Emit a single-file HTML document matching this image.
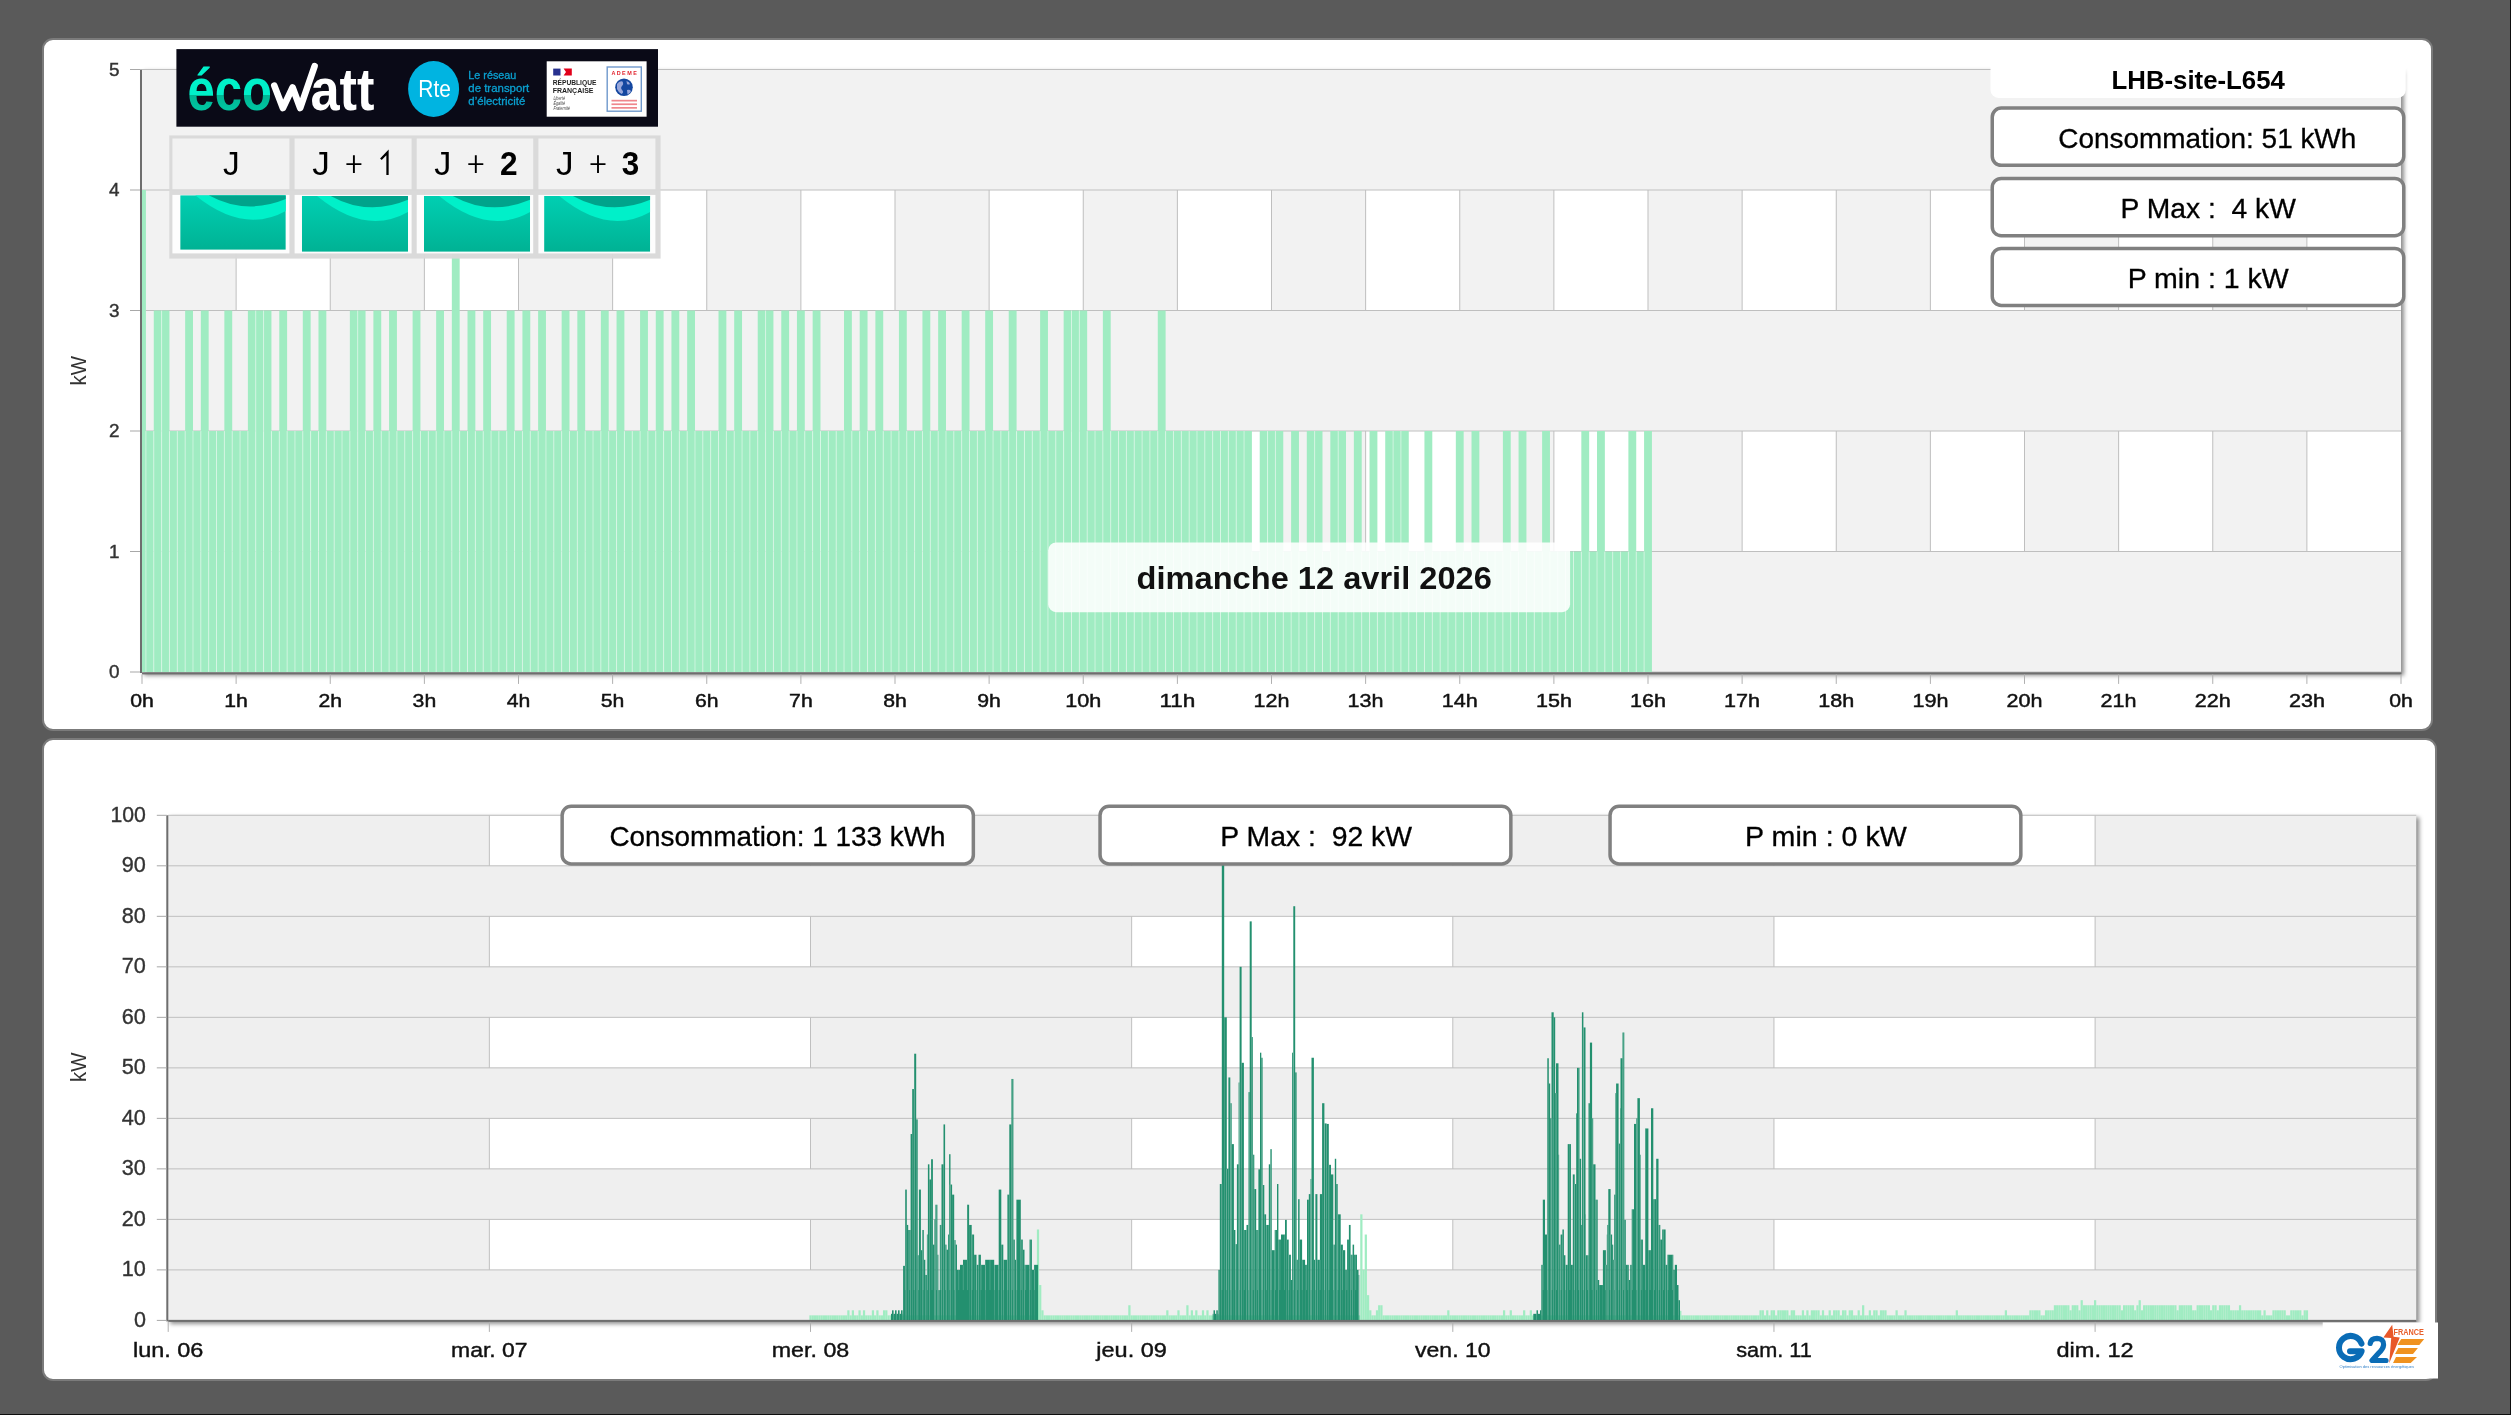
<!DOCTYPE html>
<html><head><meta charset="utf-8"><title>Consommation</title>
<style>html,body{margin:0;padding:0;background:#5a5a5a;overflow:hidden}svg{display:block;will-change:transform}text{font-family:"Liberation Sans", sans-serif}</style>
</head><body>
<svg width="2511" height="1415" viewBox="0 0 2511 1415">
<rect x="0" y="0" width="2511" height="1415" fill="#5a5a5a"/>
<rect x="2510" y="0" width="1" height="1415" fill="#0e0e0e"/>
<rect x="0" y="1414" width="2511" height="1" fill="#0e0e0e"/>
<rect x="43" y="39" width="2389" height="691" rx="10" fill="#fff" stroke="#7b7b7b" stroke-width="2"/>
<rect x="43" y="739" width="2393" height="641" rx="10" fill="#fff" stroke="#7b7b7b" stroke-width="2"/>
<defs><filter id="shblur" x="-5%" y="-5%" width="110%" height="110%"><feGaussianBlur stdDeviation="2.2"/></filter></defs>
<rect x="144.0" y="71.5" width="2260.0" height="604.0" fill="#000" fill-opacity="0.45" filter="url(#shblur)"/>
<rect x="142.0" y="69.5" width="2259.0" height="602.5" fill="#f2f2f2"/>
<rect x="236.12" y="431.00" width="94.12" height="120.50" fill="#fff"/>
<rect x="424.38" y="431.00" width="94.12" height="120.50" fill="#fff"/>
<rect x="612.62" y="431.00" width="94.12" height="120.50" fill="#fff"/>
<rect x="800.88" y="431.00" width="94.12" height="120.50" fill="#fff"/>
<rect x="989.12" y="431.00" width="94.12" height="120.50" fill="#fff"/>
<rect x="1177.38" y="431.00" width="94.12" height="120.50" fill="#fff"/>
<rect x="1365.62" y="431.00" width="94.12" height="120.50" fill="#fff"/>
<rect x="1553.88" y="431.00" width="94.12" height="120.50" fill="#fff"/>
<rect x="1742.12" y="431.00" width="94.12" height="120.50" fill="#fff"/>
<rect x="1930.38" y="431.00" width="94.12" height="120.50" fill="#fff"/>
<rect x="2118.62" y="431.00" width="94.12" height="120.50" fill="#fff"/>
<rect x="2306.88" y="431.00" width="94.12" height="120.50" fill="#fff"/>
<rect x="235.62" y="431.00" width="1" height="120.50" fill="#bfbfbf"/>
<rect x="329.75" y="431.00" width="1" height="120.50" fill="#bfbfbf"/>
<rect x="423.88" y="431.00" width="1" height="120.50" fill="#bfbfbf"/>
<rect x="518.00" y="431.00" width="1" height="120.50" fill="#bfbfbf"/>
<rect x="612.12" y="431.00" width="1" height="120.50" fill="#bfbfbf"/>
<rect x="706.25" y="431.00" width="1" height="120.50" fill="#bfbfbf"/>
<rect x="800.38" y="431.00" width="1" height="120.50" fill="#bfbfbf"/>
<rect x="894.50" y="431.00" width="1" height="120.50" fill="#bfbfbf"/>
<rect x="988.62" y="431.00" width="1" height="120.50" fill="#bfbfbf"/>
<rect x="1082.75" y="431.00" width="1" height="120.50" fill="#bfbfbf"/>
<rect x="1176.88" y="431.00" width="1" height="120.50" fill="#bfbfbf"/>
<rect x="1271.00" y="431.00" width="1" height="120.50" fill="#bfbfbf"/>
<rect x="1365.12" y="431.00" width="1" height="120.50" fill="#bfbfbf"/>
<rect x="1459.25" y="431.00" width="1" height="120.50" fill="#bfbfbf"/>
<rect x="1553.38" y="431.00" width="1" height="120.50" fill="#bfbfbf"/>
<rect x="1647.50" y="431.00" width="1" height="120.50" fill="#bfbfbf"/>
<rect x="1741.62" y="431.00" width="1" height="120.50" fill="#bfbfbf"/>
<rect x="1835.75" y="431.00" width="1" height="120.50" fill="#bfbfbf"/>
<rect x="1929.88" y="431.00" width="1" height="120.50" fill="#bfbfbf"/>
<rect x="2024.00" y="431.00" width="1" height="120.50" fill="#bfbfbf"/>
<rect x="2118.12" y="431.00" width="1" height="120.50" fill="#bfbfbf"/>
<rect x="2212.25" y="431.00" width="1" height="120.50" fill="#bfbfbf"/>
<rect x="2306.38" y="431.00" width="1" height="120.50" fill="#bfbfbf"/>
<rect x="236.12" y="190.00" width="94.12" height="120.50" fill="#fff"/>
<rect x="424.38" y="190.00" width="94.12" height="120.50" fill="#fff"/>
<rect x="612.62" y="190.00" width="94.12" height="120.50" fill="#fff"/>
<rect x="800.88" y="190.00" width="94.12" height="120.50" fill="#fff"/>
<rect x="989.12" y="190.00" width="94.12" height="120.50" fill="#fff"/>
<rect x="1177.38" y="190.00" width="94.12" height="120.50" fill="#fff"/>
<rect x="1365.62" y="190.00" width="94.12" height="120.50" fill="#fff"/>
<rect x="1553.88" y="190.00" width="94.12" height="120.50" fill="#fff"/>
<rect x="1742.12" y="190.00" width="94.12" height="120.50" fill="#fff"/>
<rect x="1930.38" y="190.00" width="94.12" height="120.50" fill="#fff"/>
<rect x="2118.62" y="190.00" width="94.12" height="120.50" fill="#fff"/>
<rect x="2306.88" y="190.00" width="94.12" height="120.50" fill="#fff"/>
<rect x="235.62" y="190.00" width="1" height="120.50" fill="#bfbfbf"/>
<rect x="329.75" y="190.00" width="1" height="120.50" fill="#bfbfbf"/>
<rect x="423.88" y="190.00" width="1" height="120.50" fill="#bfbfbf"/>
<rect x="518.00" y="190.00" width="1" height="120.50" fill="#bfbfbf"/>
<rect x="612.12" y="190.00" width="1" height="120.50" fill="#bfbfbf"/>
<rect x="706.25" y="190.00" width="1" height="120.50" fill="#bfbfbf"/>
<rect x="800.38" y="190.00" width="1" height="120.50" fill="#bfbfbf"/>
<rect x="894.50" y="190.00" width="1" height="120.50" fill="#bfbfbf"/>
<rect x="988.62" y="190.00" width="1" height="120.50" fill="#bfbfbf"/>
<rect x="1082.75" y="190.00" width="1" height="120.50" fill="#bfbfbf"/>
<rect x="1176.88" y="190.00" width="1" height="120.50" fill="#bfbfbf"/>
<rect x="1271.00" y="190.00" width="1" height="120.50" fill="#bfbfbf"/>
<rect x="1365.12" y="190.00" width="1" height="120.50" fill="#bfbfbf"/>
<rect x="1459.25" y="190.00" width="1" height="120.50" fill="#bfbfbf"/>
<rect x="1553.38" y="190.00" width="1" height="120.50" fill="#bfbfbf"/>
<rect x="1647.50" y="190.00" width="1" height="120.50" fill="#bfbfbf"/>
<rect x="1741.62" y="190.00" width="1" height="120.50" fill="#bfbfbf"/>
<rect x="1835.75" y="190.00" width="1" height="120.50" fill="#bfbfbf"/>
<rect x="1929.88" y="190.00" width="1" height="120.50" fill="#bfbfbf"/>
<rect x="2024.00" y="190.00" width="1" height="120.50" fill="#bfbfbf"/>
<rect x="2118.12" y="190.00" width="1" height="120.50" fill="#bfbfbf"/>
<rect x="2212.25" y="190.00" width="1" height="120.50" fill="#bfbfbf"/>
<rect x="2306.38" y="190.00" width="1" height="120.50" fill="#bfbfbf"/>
<rect x="142.0" y="671.50" width="2259.0" height="1" fill="#bfbfbf"/>
<rect x="142.0" y="551.00" width="2259.0" height="1" fill="#bfbfbf"/>
<rect x="142.0" y="430.50" width="2259.0" height="1" fill="#bfbfbf"/>
<rect x="142.0" y="310.00" width="2259.0" height="1" fill="#bfbfbf"/>
<rect x="142.0" y="189.50" width="2259.0" height="1" fill="#bfbfbf"/>
<rect x="142.0" y="69.00" width="2259.0" height="1" fill="#bfbfbf"/>
<g>
<rect x="142.00" y="190.00" width="3.92" height="482.00" fill="#a0ecc2"/>
<rect x="145.92" y="431.00" width="7.84" height="241.00" fill="#a0ecc2"/>
<rect x="153.77" y="310.50" width="7.84" height="361.50" fill="#a0ecc2"/>
<rect x="161.61" y="310.50" width="7.84" height="361.50" fill="#a0ecc2"/>
<rect x="169.45" y="431.00" width="7.84" height="241.00" fill="#a0ecc2"/>
<rect x="177.30" y="431.00" width="7.84" height="241.00" fill="#a0ecc2"/>
<rect x="185.14" y="310.50" width="7.84" height="361.50" fill="#a0ecc2"/>
<rect x="192.98" y="431.00" width="7.84" height="241.00" fill="#a0ecc2"/>
<rect x="200.83" y="310.50" width="7.84" height="361.50" fill="#a0ecc2"/>
<rect x="208.67" y="431.00" width="7.84" height="241.00" fill="#a0ecc2"/>
<rect x="216.52" y="431.00" width="7.84" height="241.00" fill="#a0ecc2"/>
<rect x="224.36" y="310.50" width="7.84" height="361.50" fill="#a0ecc2"/>
<rect x="232.20" y="431.00" width="7.84" height="241.00" fill="#a0ecc2"/>
<rect x="240.05" y="431.00" width="7.84" height="241.00" fill="#a0ecc2"/>
<rect x="247.89" y="310.50" width="7.84" height="361.50" fill="#a0ecc2"/>
<rect x="255.73" y="310.50" width="7.84" height="361.50" fill="#a0ecc2"/>
<rect x="263.58" y="310.50" width="7.84" height="361.50" fill="#a0ecc2"/>
<rect x="271.42" y="431.00" width="7.84" height="241.00" fill="#a0ecc2"/>
<rect x="279.27" y="310.50" width="7.84" height="361.50" fill="#a0ecc2"/>
<rect x="287.11" y="431.00" width="7.84" height="241.00" fill="#a0ecc2"/>
<rect x="294.95" y="431.00" width="7.84" height="241.00" fill="#a0ecc2"/>
<rect x="302.80" y="310.50" width="7.84" height="361.50" fill="#a0ecc2"/>
<rect x="310.64" y="431.00" width="7.84" height="241.00" fill="#a0ecc2"/>
<rect x="318.48" y="310.50" width="7.84" height="361.50" fill="#a0ecc2"/>
<rect x="326.33" y="431.00" width="7.84" height="241.00" fill="#a0ecc2"/>
<rect x="334.17" y="431.00" width="7.84" height="241.00" fill="#a0ecc2"/>
<rect x="342.02" y="431.00" width="7.84" height="241.00" fill="#a0ecc2"/>
<rect x="349.86" y="310.50" width="7.84" height="361.50" fill="#a0ecc2"/>
<rect x="357.70" y="310.50" width="7.84" height="361.50" fill="#a0ecc2"/>
<rect x="365.55" y="431.00" width="7.84" height="241.00" fill="#a0ecc2"/>
<rect x="373.39" y="310.50" width="7.84" height="361.50" fill="#a0ecc2"/>
<rect x="381.23" y="431.00" width="7.84" height="241.00" fill="#a0ecc2"/>
<rect x="389.08" y="310.50" width="7.84" height="361.50" fill="#a0ecc2"/>
<rect x="396.92" y="431.00" width="7.84" height="241.00" fill="#a0ecc2"/>
<rect x="404.77" y="431.00" width="7.84" height="241.00" fill="#a0ecc2"/>
<rect x="412.61" y="310.50" width="7.84" height="361.50" fill="#a0ecc2"/>
<rect x="420.45" y="431.00" width="7.84" height="241.00" fill="#a0ecc2"/>
<rect x="428.30" y="431.00" width="7.84" height="241.00" fill="#a0ecc2"/>
<rect x="436.14" y="310.50" width="7.84" height="361.50" fill="#a0ecc2"/>
<rect x="443.98" y="431.00" width="7.84" height="241.00" fill="#a0ecc2"/>
<rect x="451.83" y="190.00" width="7.84" height="482.00" fill="#a0ecc2"/>
<rect x="459.67" y="431.00" width="7.84" height="241.00" fill="#a0ecc2"/>
<rect x="467.52" y="310.50" width="7.84" height="361.50" fill="#a0ecc2"/>
<rect x="475.36" y="431.00" width="7.84" height="241.00" fill="#a0ecc2"/>
<rect x="483.20" y="310.50" width="7.84" height="361.50" fill="#a0ecc2"/>
<rect x="491.05" y="431.00" width="7.84" height="241.00" fill="#a0ecc2"/>
<rect x="498.89" y="431.00" width="7.84" height="241.00" fill="#a0ecc2"/>
<rect x="506.73" y="310.50" width="7.84" height="361.50" fill="#a0ecc2"/>
<rect x="514.58" y="431.00" width="7.84" height="241.00" fill="#a0ecc2"/>
<rect x="522.42" y="310.50" width="7.84" height="361.50" fill="#a0ecc2"/>
<rect x="530.27" y="431.00" width="7.84" height="241.00" fill="#a0ecc2"/>
<rect x="538.11" y="310.50" width="7.84" height="361.50" fill="#a0ecc2"/>
<rect x="545.95" y="431.00" width="7.84" height="241.00" fill="#a0ecc2"/>
<rect x="553.80" y="431.00" width="7.84" height="241.00" fill="#a0ecc2"/>
<rect x="561.64" y="310.50" width="7.84" height="361.50" fill="#a0ecc2"/>
<rect x="569.48" y="431.00" width="7.84" height="241.00" fill="#a0ecc2"/>
<rect x="577.33" y="310.50" width="7.84" height="361.50" fill="#a0ecc2"/>
<rect x="585.17" y="431.00" width="7.84" height="241.00" fill="#a0ecc2"/>
<rect x="593.02" y="431.00" width="7.84" height="241.00" fill="#a0ecc2"/>
<rect x="600.86" y="310.50" width="7.84" height="361.50" fill="#a0ecc2"/>
<rect x="608.70" y="431.00" width="7.84" height="241.00" fill="#a0ecc2"/>
<rect x="616.55" y="310.50" width="7.84" height="361.50" fill="#a0ecc2"/>
<rect x="624.39" y="431.00" width="7.84" height="241.00" fill="#a0ecc2"/>
<rect x="632.23" y="431.00" width="7.84" height="241.00" fill="#a0ecc2"/>
<rect x="640.08" y="310.50" width="7.84" height="361.50" fill="#a0ecc2"/>
<rect x="647.92" y="431.00" width="7.84" height="241.00" fill="#a0ecc2"/>
<rect x="655.77" y="310.50" width="7.84" height="361.50" fill="#a0ecc2"/>
<rect x="663.61" y="431.00" width="7.84" height="241.00" fill="#a0ecc2"/>
<rect x="671.45" y="310.50" width="7.84" height="361.50" fill="#a0ecc2"/>
<rect x="679.30" y="431.00" width="7.84" height="241.00" fill="#a0ecc2"/>
<rect x="687.14" y="310.50" width="7.84" height="361.50" fill="#a0ecc2"/>
<rect x="694.98" y="431.00" width="7.84" height="241.00" fill="#a0ecc2"/>
<rect x="702.83" y="431.00" width="7.84" height="241.00" fill="#a0ecc2"/>
<rect x="710.67" y="431.00" width="7.84" height="241.00" fill="#a0ecc2"/>
<rect x="718.52" y="310.50" width="7.84" height="361.50" fill="#a0ecc2"/>
<rect x="726.36" y="431.00" width="7.84" height="241.00" fill="#a0ecc2"/>
<rect x="734.20" y="310.50" width="7.84" height="361.50" fill="#a0ecc2"/>
<rect x="742.05" y="431.00" width="7.84" height="241.00" fill="#a0ecc2"/>
<rect x="749.89" y="431.00" width="7.84" height="241.00" fill="#a0ecc2"/>
<rect x="757.73" y="310.50" width="7.84" height="361.50" fill="#a0ecc2"/>
<rect x="765.58" y="310.50" width="7.84" height="361.50" fill="#a0ecc2"/>
<rect x="773.42" y="431.00" width="7.84" height="241.00" fill="#a0ecc2"/>
<rect x="781.27" y="310.50" width="7.84" height="361.50" fill="#a0ecc2"/>
<rect x="789.11" y="431.00" width="7.84" height="241.00" fill="#a0ecc2"/>
<rect x="796.95" y="310.50" width="7.84" height="361.50" fill="#a0ecc2"/>
<rect x="804.80" y="431.00" width="7.84" height="241.00" fill="#a0ecc2"/>
<rect x="812.64" y="310.50" width="7.84" height="361.50" fill="#a0ecc2"/>
<rect x="820.48" y="431.00" width="7.84" height="241.00" fill="#a0ecc2"/>
<rect x="828.33" y="431.00" width="7.84" height="241.00" fill="#a0ecc2"/>
<rect x="836.17" y="431.00" width="7.84" height="241.00" fill="#a0ecc2"/>
<rect x="844.02" y="310.50" width="7.84" height="361.50" fill="#a0ecc2"/>
<rect x="851.86" y="431.00" width="7.84" height="241.00" fill="#a0ecc2"/>
<rect x="859.70" y="310.50" width="7.84" height="361.50" fill="#a0ecc2"/>
<rect x="867.55" y="431.00" width="7.84" height="241.00" fill="#a0ecc2"/>
<rect x="875.39" y="310.50" width="7.84" height="361.50" fill="#a0ecc2"/>
<rect x="883.23" y="431.00" width="7.84" height="241.00" fill="#a0ecc2"/>
<rect x="891.08" y="431.00" width="7.84" height="241.00" fill="#a0ecc2"/>
<rect x="898.92" y="310.50" width="7.84" height="361.50" fill="#a0ecc2"/>
<rect x="906.77" y="431.00" width="7.84" height="241.00" fill="#a0ecc2"/>
<rect x="914.61" y="431.00" width="7.84" height="241.00" fill="#a0ecc2"/>
<rect x="922.45" y="310.50" width="7.84" height="361.50" fill="#a0ecc2"/>
<rect x="930.30" y="431.00" width="7.84" height="241.00" fill="#a0ecc2"/>
<rect x="938.14" y="310.50" width="7.84" height="361.50" fill="#a0ecc2"/>
<rect x="945.98" y="431.00" width="7.84" height="241.00" fill="#a0ecc2"/>
<rect x="953.83" y="431.00" width="7.84" height="241.00" fill="#a0ecc2"/>
<rect x="961.67" y="310.50" width="7.84" height="361.50" fill="#a0ecc2"/>
<rect x="969.52" y="431.00" width="7.84" height="241.00" fill="#a0ecc2"/>
<rect x="977.36" y="431.00" width="7.84" height="241.00" fill="#a0ecc2"/>
<rect x="985.20" y="310.50" width="7.84" height="361.50" fill="#a0ecc2"/>
<rect x="993.05" y="431.00" width="7.84" height="241.00" fill="#a0ecc2"/>
<rect x="1000.89" y="431.00" width="7.84" height="241.00" fill="#a0ecc2"/>
<rect x="1008.73" y="310.50" width="7.84" height="361.50" fill="#a0ecc2"/>
<rect x="1016.58" y="431.00" width="7.84" height="241.00" fill="#a0ecc2"/>
<rect x="1024.42" y="431.00" width="7.84" height="241.00" fill="#a0ecc2"/>
<rect x="1032.27" y="431.00" width="7.84" height="241.00" fill="#a0ecc2"/>
<rect x="1040.11" y="310.50" width="7.84" height="361.50" fill="#a0ecc2"/>
<rect x="1047.95" y="431.00" width="7.84" height="241.00" fill="#a0ecc2"/>
<rect x="1055.80" y="431.00" width="7.84" height="241.00" fill="#a0ecc2"/>
<rect x="1063.64" y="310.50" width="7.84" height="361.50" fill="#a0ecc2"/>
<rect x="1071.48" y="310.50" width="7.84" height="361.50" fill="#a0ecc2"/>
<rect x="1079.33" y="310.50" width="7.84" height="361.50" fill="#a0ecc2"/>
<rect x="1087.17" y="431.00" width="7.84" height="241.00" fill="#a0ecc2"/>
<rect x="1095.02" y="431.00" width="7.84" height="241.00" fill="#a0ecc2"/>
<rect x="1102.86" y="310.50" width="7.84" height="361.50" fill="#a0ecc2"/>
<rect x="1110.70" y="431.00" width="7.84" height="241.00" fill="#a0ecc2"/>
<rect x="1118.55" y="431.00" width="7.84" height="241.00" fill="#a0ecc2"/>
<rect x="1126.39" y="431.00" width="7.84" height="241.00" fill="#a0ecc2"/>
<rect x="1134.23" y="431.00" width="7.84" height="241.00" fill="#a0ecc2"/>
<rect x="1142.08" y="431.00" width="7.84" height="241.00" fill="#a0ecc2"/>
<rect x="1149.92" y="431.00" width="7.84" height="241.00" fill="#a0ecc2"/>
<rect x="1157.77" y="310.50" width="7.84" height="361.50" fill="#a0ecc2"/>
<rect x="1165.61" y="431.00" width="7.84" height="241.00" fill="#a0ecc2"/>
<rect x="1173.45" y="431.00" width="7.84" height="241.00" fill="#a0ecc2"/>
<rect x="1181.30" y="431.00" width="7.84" height="241.00" fill="#a0ecc2"/>
<rect x="1189.14" y="431.00" width="7.84" height="241.00" fill="#a0ecc2"/>
<rect x="1196.98" y="431.00" width="7.84" height="241.00" fill="#a0ecc2"/>
<rect x="1204.83" y="431.00" width="7.84" height="241.00" fill="#a0ecc2"/>
<rect x="1212.67" y="431.00" width="7.84" height="241.00" fill="#a0ecc2"/>
<rect x="1220.52" y="431.00" width="7.84" height="241.00" fill="#a0ecc2"/>
<rect x="1228.36" y="431.00" width="7.84" height="241.00" fill="#a0ecc2"/>
<rect x="1236.20" y="431.00" width="7.84" height="241.00" fill="#a0ecc2"/>
<rect x="1244.05" y="431.00" width="7.84" height="241.00" fill="#a0ecc2"/>
<rect x="1251.89" y="551.50" width="7.84" height="120.50" fill="#a0ecc2"/>
<rect x="1259.73" y="431.00" width="7.84" height="241.00" fill="#a0ecc2"/>
<rect x="1267.58" y="431.00" width="7.84" height="241.00" fill="#a0ecc2"/>
<rect x="1275.42" y="431.00" width="7.84" height="241.00" fill="#a0ecc2"/>
<rect x="1283.27" y="551.50" width="7.84" height="120.50" fill="#a0ecc2"/>
<rect x="1291.11" y="431.00" width="7.84" height="241.00" fill="#a0ecc2"/>
<rect x="1298.95" y="551.50" width="7.84" height="120.50" fill="#a0ecc2"/>
<rect x="1306.80" y="431.00" width="7.84" height="241.00" fill="#a0ecc2"/>
<rect x="1314.64" y="431.00" width="7.84" height="241.00" fill="#a0ecc2"/>
<rect x="1322.48" y="551.50" width="7.84" height="120.50" fill="#a0ecc2"/>
<rect x="1330.33" y="431.00" width="7.84" height="241.00" fill="#a0ecc2"/>
<rect x="1338.17" y="431.00" width="7.84" height="241.00" fill="#a0ecc2"/>
<rect x="1346.02" y="551.50" width="7.84" height="120.50" fill="#a0ecc2"/>
<rect x="1353.86" y="431.00" width="7.84" height="241.00" fill="#a0ecc2"/>
<rect x="1361.70" y="551.50" width="7.84" height="120.50" fill="#a0ecc2"/>
<rect x="1369.55" y="431.00" width="7.84" height="241.00" fill="#a0ecc2"/>
<rect x="1377.39" y="551.50" width="7.84" height="120.50" fill="#a0ecc2"/>
<rect x="1385.23" y="431.00" width="7.84" height="241.00" fill="#a0ecc2"/>
<rect x="1393.08" y="431.00" width="7.84" height="241.00" fill="#a0ecc2"/>
<rect x="1400.92" y="431.00" width="7.84" height="241.00" fill="#a0ecc2"/>
<rect x="1408.77" y="551.50" width="7.84" height="120.50" fill="#a0ecc2"/>
<rect x="1416.61" y="551.50" width="7.84" height="120.50" fill="#a0ecc2"/>
<rect x="1424.45" y="431.00" width="7.84" height="241.00" fill="#a0ecc2"/>
<rect x="1432.30" y="551.50" width="7.84" height="120.50" fill="#a0ecc2"/>
<rect x="1440.14" y="551.50" width="7.84" height="120.50" fill="#a0ecc2"/>
<rect x="1447.98" y="551.50" width="7.84" height="120.50" fill="#a0ecc2"/>
<rect x="1455.83" y="431.00" width="7.84" height="241.00" fill="#a0ecc2"/>
<rect x="1463.67" y="551.50" width="7.84" height="120.50" fill="#a0ecc2"/>
<rect x="1471.52" y="431.00" width="7.84" height="241.00" fill="#a0ecc2"/>
<rect x="1479.36" y="551.50" width="7.84" height="120.50" fill="#a0ecc2"/>
<rect x="1487.20" y="551.50" width="7.84" height="120.50" fill="#a0ecc2"/>
<rect x="1495.05" y="551.50" width="7.84" height="120.50" fill="#a0ecc2"/>
<rect x="1502.89" y="431.00" width="7.84" height="241.00" fill="#a0ecc2"/>
<rect x="1510.73" y="551.50" width="7.84" height="120.50" fill="#a0ecc2"/>
<rect x="1518.58" y="431.00" width="7.84" height="241.00" fill="#a0ecc2"/>
<rect x="1526.42" y="551.50" width="7.84" height="120.50" fill="#a0ecc2"/>
<rect x="1534.27" y="551.50" width="7.84" height="120.50" fill="#a0ecc2"/>
<rect x="1542.11" y="431.00" width="7.84" height="241.00" fill="#a0ecc2"/>
<rect x="1549.95" y="551.50" width="7.84" height="120.50" fill="#a0ecc2"/>
<rect x="1557.80" y="551.50" width="7.84" height="120.50" fill="#a0ecc2"/>
<rect x="1565.64" y="551.50" width="7.84" height="120.50" fill="#a0ecc2"/>
<rect x="1573.48" y="551.50" width="7.84" height="120.50" fill="#a0ecc2"/>
<rect x="1581.33" y="431.00" width="7.84" height="241.00" fill="#a0ecc2"/>
<rect x="1589.17" y="551.50" width="7.84" height="120.50" fill="#a0ecc2"/>
<rect x="1597.02" y="431.00" width="7.84" height="241.00" fill="#a0ecc2"/>
<rect x="1604.86" y="551.50" width="7.84" height="120.50" fill="#a0ecc2"/>
<rect x="1612.70" y="551.50" width="7.84" height="120.50" fill="#a0ecc2"/>
<rect x="1620.55" y="551.50" width="7.84" height="120.50" fill="#a0ecc2"/>
<rect x="1628.39" y="431.00" width="7.84" height="241.00" fill="#a0ecc2"/>
<rect x="1636.23" y="551.50" width="7.84" height="120.50" fill="#a0ecc2"/>
<rect x="1644.08" y="431.00" width="7.84" height="241.00" fill="#a0ecc2"/>
<rect x="145.42" y="431.00" width="1" height="241.00" fill="#fff" fill-opacity="0.45"/>
<rect x="153.27" y="431.00" width="1" height="241.00" fill="#fff" fill-opacity="0.45"/>
<rect x="161.11" y="310.50" width="1" height="361.50" fill="#fff" fill-opacity="0.45"/>
<rect x="168.95" y="431.00" width="1" height="241.00" fill="#fff" fill-opacity="0.45"/>
<rect x="176.80" y="431.00" width="1" height="241.00" fill="#fff" fill-opacity="0.45"/>
<rect x="184.64" y="431.00" width="1" height="241.00" fill="#fff" fill-opacity="0.45"/>
<rect x="192.48" y="431.00" width="1" height="241.00" fill="#fff" fill-opacity="0.45"/>
<rect x="200.33" y="431.00" width="1" height="241.00" fill="#fff" fill-opacity="0.45"/>
<rect x="208.17" y="431.00" width="1" height="241.00" fill="#fff" fill-opacity="0.45"/>
<rect x="216.02" y="431.00" width="1" height="241.00" fill="#fff" fill-opacity="0.45"/>
<rect x="223.86" y="431.00" width="1" height="241.00" fill="#fff" fill-opacity="0.45"/>
<rect x="231.70" y="431.00" width="1" height="241.00" fill="#fff" fill-opacity="0.45"/>
<rect x="239.55" y="431.00" width="1" height="241.00" fill="#fff" fill-opacity="0.45"/>
<rect x="247.39" y="431.00" width="1" height="241.00" fill="#fff" fill-opacity="0.45"/>
<rect x="255.23" y="310.50" width="1" height="361.50" fill="#fff" fill-opacity="0.45"/>
<rect x="263.08" y="310.50" width="1" height="361.50" fill="#fff" fill-opacity="0.45"/>
<rect x="270.92" y="431.00" width="1" height="241.00" fill="#fff" fill-opacity="0.45"/>
<rect x="278.77" y="431.00" width="1" height="241.00" fill="#fff" fill-opacity="0.45"/>
<rect x="286.61" y="431.00" width="1" height="241.00" fill="#fff" fill-opacity="0.45"/>
<rect x="294.45" y="431.00" width="1" height="241.00" fill="#fff" fill-opacity="0.45"/>
<rect x="302.30" y="431.00" width="1" height="241.00" fill="#fff" fill-opacity="0.45"/>
<rect x="310.14" y="431.00" width="1" height="241.00" fill="#fff" fill-opacity="0.45"/>
<rect x="317.98" y="431.00" width="1" height="241.00" fill="#fff" fill-opacity="0.45"/>
<rect x="325.83" y="431.00" width="1" height="241.00" fill="#fff" fill-opacity="0.45"/>
<rect x="333.67" y="431.00" width="1" height="241.00" fill="#fff" fill-opacity="0.45"/>
<rect x="341.52" y="431.00" width="1" height="241.00" fill="#fff" fill-opacity="0.45"/>
<rect x="349.36" y="431.00" width="1" height="241.00" fill="#fff" fill-opacity="0.45"/>
<rect x="357.20" y="310.50" width="1" height="361.50" fill="#fff" fill-opacity="0.45"/>
<rect x="365.05" y="431.00" width="1" height="241.00" fill="#fff" fill-opacity="0.45"/>
<rect x="372.89" y="431.00" width="1" height="241.00" fill="#fff" fill-opacity="0.45"/>
<rect x="380.73" y="431.00" width="1" height="241.00" fill="#fff" fill-opacity="0.45"/>
<rect x="388.58" y="431.00" width="1" height="241.00" fill="#fff" fill-opacity="0.45"/>
<rect x="396.42" y="431.00" width="1" height="241.00" fill="#fff" fill-opacity="0.45"/>
<rect x="404.27" y="431.00" width="1" height="241.00" fill="#fff" fill-opacity="0.45"/>
<rect x="412.11" y="431.00" width="1" height="241.00" fill="#fff" fill-opacity="0.45"/>
<rect x="419.95" y="431.00" width="1" height="241.00" fill="#fff" fill-opacity="0.45"/>
<rect x="427.80" y="431.00" width="1" height="241.00" fill="#fff" fill-opacity="0.45"/>
<rect x="435.64" y="431.00" width="1" height="241.00" fill="#fff" fill-opacity="0.45"/>
<rect x="443.48" y="431.00" width="1" height="241.00" fill="#fff" fill-opacity="0.45"/>
<rect x="451.33" y="431.00" width="1" height="241.00" fill="#fff" fill-opacity="0.45"/>
<rect x="459.17" y="431.00" width="1" height="241.00" fill="#fff" fill-opacity="0.45"/>
<rect x="467.02" y="431.00" width="1" height="241.00" fill="#fff" fill-opacity="0.45"/>
<rect x="474.86" y="431.00" width="1" height="241.00" fill="#fff" fill-opacity="0.45"/>
<rect x="482.70" y="431.00" width="1" height="241.00" fill="#fff" fill-opacity="0.45"/>
<rect x="490.55" y="431.00" width="1" height="241.00" fill="#fff" fill-opacity="0.45"/>
<rect x="498.39" y="431.00" width="1" height="241.00" fill="#fff" fill-opacity="0.45"/>
<rect x="506.23" y="431.00" width="1" height="241.00" fill="#fff" fill-opacity="0.45"/>
<rect x="514.08" y="431.00" width="1" height="241.00" fill="#fff" fill-opacity="0.45"/>
<rect x="521.92" y="431.00" width="1" height="241.00" fill="#fff" fill-opacity="0.45"/>
<rect x="529.77" y="431.00" width="1" height="241.00" fill="#fff" fill-opacity="0.45"/>
<rect x="537.61" y="431.00" width="1" height="241.00" fill="#fff" fill-opacity="0.45"/>
<rect x="545.45" y="431.00" width="1" height="241.00" fill="#fff" fill-opacity="0.45"/>
<rect x="553.30" y="431.00" width="1" height="241.00" fill="#fff" fill-opacity="0.45"/>
<rect x="561.14" y="431.00" width="1" height="241.00" fill="#fff" fill-opacity="0.45"/>
<rect x="568.98" y="431.00" width="1" height="241.00" fill="#fff" fill-opacity="0.45"/>
<rect x="576.83" y="431.00" width="1" height="241.00" fill="#fff" fill-opacity="0.45"/>
<rect x="584.67" y="431.00" width="1" height="241.00" fill="#fff" fill-opacity="0.45"/>
<rect x="592.52" y="431.00" width="1" height="241.00" fill="#fff" fill-opacity="0.45"/>
<rect x="600.36" y="431.00" width="1" height="241.00" fill="#fff" fill-opacity="0.45"/>
<rect x="608.20" y="431.00" width="1" height="241.00" fill="#fff" fill-opacity="0.45"/>
<rect x="616.05" y="431.00" width="1" height="241.00" fill="#fff" fill-opacity="0.45"/>
<rect x="623.89" y="431.00" width="1" height="241.00" fill="#fff" fill-opacity="0.45"/>
<rect x="631.73" y="431.00" width="1" height="241.00" fill="#fff" fill-opacity="0.45"/>
<rect x="639.58" y="431.00" width="1" height="241.00" fill="#fff" fill-opacity="0.45"/>
<rect x="647.42" y="431.00" width="1" height="241.00" fill="#fff" fill-opacity="0.45"/>
<rect x="655.27" y="431.00" width="1" height="241.00" fill="#fff" fill-opacity="0.45"/>
<rect x="663.11" y="431.00" width="1" height="241.00" fill="#fff" fill-opacity="0.45"/>
<rect x="670.95" y="431.00" width="1" height="241.00" fill="#fff" fill-opacity="0.45"/>
<rect x="678.80" y="431.00" width="1" height="241.00" fill="#fff" fill-opacity="0.45"/>
<rect x="686.64" y="431.00" width="1" height="241.00" fill="#fff" fill-opacity="0.45"/>
<rect x="694.48" y="431.00" width="1" height="241.00" fill="#fff" fill-opacity="0.45"/>
<rect x="702.33" y="431.00" width="1" height="241.00" fill="#fff" fill-opacity="0.45"/>
<rect x="710.17" y="431.00" width="1" height="241.00" fill="#fff" fill-opacity="0.45"/>
<rect x="718.02" y="431.00" width="1" height="241.00" fill="#fff" fill-opacity="0.45"/>
<rect x="725.86" y="431.00" width="1" height="241.00" fill="#fff" fill-opacity="0.45"/>
<rect x="733.70" y="431.00" width="1" height="241.00" fill="#fff" fill-opacity="0.45"/>
<rect x="741.55" y="431.00" width="1" height="241.00" fill="#fff" fill-opacity="0.45"/>
<rect x="749.39" y="431.00" width="1" height="241.00" fill="#fff" fill-opacity="0.45"/>
<rect x="757.23" y="431.00" width="1" height="241.00" fill="#fff" fill-opacity="0.45"/>
<rect x="765.08" y="310.50" width="1" height="361.50" fill="#fff" fill-opacity="0.45"/>
<rect x="772.92" y="431.00" width="1" height="241.00" fill="#fff" fill-opacity="0.45"/>
<rect x="780.77" y="431.00" width="1" height="241.00" fill="#fff" fill-opacity="0.45"/>
<rect x="788.61" y="431.00" width="1" height="241.00" fill="#fff" fill-opacity="0.45"/>
<rect x="796.45" y="431.00" width="1" height="241.00" fill="#fff" fill-opacity="0.45"/>
<rect x="804.30" y="431.00" width="1" height="241.00" fill="#fff" fill-opacity="0.45"/>
<rect x="812.14" y="431.00" width="1" height="241.00" fill="#fff" fill-opacity="0.45"/>
<rect x="819.98" y="431.00" width="1" height="241.00" fill="#fff" fill-opacity="0.45"/>
<rect x="827.83" y="431.00" width="1" height="241.00" fill="#fff" fill-opacity="0.45"/>
<rect x="835.67" y="431.00" width="1" height="241.00" fill="#fff" fill-opacity="0.45"/>
<rect x="843.52" y="431.00" width="1" height="241.00" fill="#fff" fill-opacity="0.45"/>
<rect x="851.36" y="431.00" width="1" height="241.00" fill="#fff" fill-opacity="0.45"/>
<rect x="859.20" y="431.00" width="1" height="241.00" fill="#fff" fill-opacity="0.45"/>
<rect x="867.05" y="431.00" width="1" height="241.00" fill="#fff" fill-opacity="0.45"/>
<rect x="874.89" y="431.00" width="1" height="241.00" fill="#fff" fill-opacity="0.45"/>
<rect x="882.73" y="431.00" width="1" height="241.00" fill="#fff" fill-opacity="0.45"/>
<rect x="890.58" y="431.00" width="1" height="241.00" fill="#fff" fill-opacity="0.45"/>
<rect x="898.42" y="431.00" width="1" height="241.00" fill="#fff" fill-opacity="0.45"/>
<rect x="906.27" y="431.00" width="1" height="241.00" fill="#fff" fill-opacity="0.45"/>
<rect x="914.11" y="431.00" width="1" height="241.00" fill="#fff" fill-opacity="0.45"/>
<rect x="921.95" y="431.00" width="1" height="241.00" fill="#fff" fill-opacity="0.45"/>
<rect x="929.80" y="431.00" width="1" height="241.00" fill="#fff" fill-opacity="0.45"/>
<rect x="937.64" y="431.00" width="1" height="241.00" fill="#fff" fill-opacity="0.45"/>
<rect x="945.48" y="431.00" width="1" height="241.00" fill="#fff" fill-opacity="0.45"/>
<rect x="953.33" y="431.00" width="1" height="241.00" fill="#fff" fill-opacity="0.45"/>
<rect x="961.17" y="431.00" width="1" height="241.00" fill="#fff" fill-opacity="0.45"/>
<rect x="969.02" y="431.00" width="1" height="241.00" fill="#fff" fill-opacity="0.45"/>
<rect x="976.86" y="431.00" width="1" height="241.00" fill="#fff" fill-opacity="0.45"/>
<rect x="984.70" y="431.00" width="1" height="241.00" fill="#fff" fill-opacity="0.45"/>
<rect x="992.55" y="431.00" width="1" height="241.00" fill="#fff" fill-opacity="0.45"/>
<rect x="1000.39" y="431.00" width="1" height="241.00" fill="#fff" fill-opacity="0.45"/>
<rect x="1008.23" y="431.00" width="1" height="241.00" fill="#fff" fill-opacity="0.45"/>
<rect x="1016.08" y="431.00" width="1" height="241.00" fill="#fff" fill-opacity="0.45"/>
<rect x="1023.92" y="431.00" width="1" height="241.00" fill="#fff" fill-opacity="0.45"/>
<rect x="1031.77" y="431.00" width="1" height="241.00" fill="#fff" fill-opacity="0.45"/>
<rect x="1039.61" y="431.00" width="1" height="241.00" fill="#fff" fill-opacity="0.45"/>
<rect x="1047.45" y="431.00" width="1" height="241.00" fill="#fff" fill-opacity="0.45"/>
<rect x="1055.30" y="431.00" width="1" height="241.00" fill="#fff" fill-opacity="0.45"/>
<rect x="1063.14" y="431.00" width="1" height="241.00" fill="#fff" fill-opacity="0.45"/>
<rect x="1070.98" y="310.50" width="1" height="361.50" fill="#fff" fill-opacity="0.45"/>
<rect x="1078.83" y="310.50" width="1" height="361.50" fill="#fff" fill-opacity="0.45"/>
<rect x="1086.67" y="431.00" width="1" height="241.00" fill="#fff" fill-opacity="0.45"/>
<rect x="1094.52" y="431.00" width="1" height="241.00" fill="#fff" fill-opacity="0.45"/>
<rect x="1102.36" y="431.00" width="1" height="241.00" fill="#fff" fill-opacity="0.45"/>
<rect x="1110.20" y="431.00" width="1" height="241.00" fill="#fff" fill-opacity="0.45"/>
<rect x="1118.05" y="431.00" width="1" height="241.00" fill="#fff" fill-opacity="0.45"/>
<rect x="1125.89" y="431.00" width="1" height="241.00" fill="#fff" fill-opacity="0.45"/>
<rect x="1133.73" y="431.00" width="1" height="241.00" fill="#fff" fill-opacity="0.45"/>
<rect x="1141.58" y="431.00" width="1" height="241.00" fill="#fff" fill-opacity="0.45"/>
<rect x="1149.42" y="431.00" width="1" height="241.00" fill="#fff" fill-opacity="0.45"/>
<rect x="1157.27" y="431.00" width="1" height="241.00" fill="#fff" fill-opacity="0.45"/>
<rect x="1165.11" y="431.00" width="1" height="241.00" fill="#fff" fill-opacity="0.45"/>
<rect x="1172.95" y="431.00" width="1" height="241.00" fill="#fff" fill-opacity="0.45"/>
<rect x="1180.80" y="431.00" width="1" height="241.00" fill="#fff" fill-opacity="0.45"/>
<rect x="1188.64" y="431.00" width="1" height="241.00" fill="#fff" fill-opacity="0.45"/>
<rect x="1196.48" y="431.00" width="1" height="241.00" fill="#fff" fill-opacity="0.45"/>
<rect x="1204.33" y="431.00" width="1" height="241.00" fill="#fff" fill-opacity="0.45"/>
<rect x="1212.17" y="431.00" width="1" height="241.00" fill="#fff" fill-opacity="0.45"/>
<rect x="1220.02" y="431.00" width="1" height="241.00" fill="#fff" fill-opacity="0.45"/>
<rect x="1227.86" y="431.00" width="1" height="241.00" fill="#fff" fill-opacity="0.45"/>
<rect x="1235.70" y="431.00" width="1" height="241.00" fill="#fff" fill-opacity="0.45"/>
<rect x="1243.55" y="431.00" width="1" height="241.00" fill="#fff" fill-opacity="0.45"/>
<rect x="1251.39" y="551.50" width="1" height="120.50" fill="#fff" fill-opacity="0.45"/>
<rect x="1259.23" y="551.50" width="1" height="120.50" fill="#fff" fill-opacity="0.45"/>
<rect x="1267.08" y="431.00" width="1" height="241.00" fill="#fff" fill-opacity="0.45"/>
<rect x="1274.92" y="431.00" width="1" height="241.00" fill="#fff" fill-opacity="0.45"/>
<rect x="1282.77" y="551.50" width="1" height="120.50" fill="#fff" fill-opacity="0.45"/>
<rect x="1290.61" y="551.50" width="1" height="120.50" fill="#fff" fill-opacity="0.45"/>
<rect x="1298.45" y="551.50" width="1" height="120.50" fill="#fff" fill-opacity="0.45"/>
<rect x="1306.30" y="551.50" width="1" height="120.50" fill="#fff" fill-opacity="0.45"/>
<rect x="1314.14" y="431.00" width="1" height="241.00" fill="#fff" fill-opacity="0.45"/>
<rect x="1321.98" y="551.50" width="1" height="120.50" fill="#fff" fill-opacity="0.45"/>
<rect x="1329.83" y="551.50" width="1" height="120.50" fill="#fff" fill-opacity="0.45"/>
<rect x="1337.67" y="431.00" width="1" height="241.00" fill="#fff" fill-opacity="0.45"/>
<rect x="1345.52" y="551.50" width="1" height="120.50" fill="#fff" fill-opacity="0.45"/>
<rect x="1353.36" y="551.50" width="1" height="120.50" fill="#fff" fill-opacity="0.45"/>
<rect x="1361.20" y="551.50" width="1" height="120.50" fill="#fff" fill-opacity="0.45"/>
<rect x="1369.05" y="551.50" width="1" height="120.50" fill="#fff" fill-opacity="0.45"/>
<rect x="1376.89" y="551.50" width="1" height="120.50" fill="#fff" fill-opacity="0.45"/>
<rect x="1384.73" y="551.50" width="1" height="120.50" fill="#fff" fill-opacity="0.45"/>
<rect x="1392.58" y="431.00" width="1" height="241.00" fill="#fff" fill-opacity="0.45"/>
<rect x="1400.42" y="431.00" width="1" height="241.00" fill="#fff" fill-opacity="0.45"/>
<rect x="1408.27" y="551.50" width="1" height="120.50" fill="#fff" fill-opacity="0.45"/>
<rect x="1416.11" y="551.50" width="1" height="120.50" fill="#fff" fill-opacity="0.45"/>
<rect x="1423.95" y="551.50" width="1" height="120.50" fill="#fff" fill-opacity="0.45"/>
<rect x="1431.80" y="551.50" width="1" height="120.50" fill="#fff" fill-opacity="0.45"/>
<rect x="1439.64" y="551.50" width="1" height="120.50" fill="#fff" fill-opacity="0.45"/>
<rect x="1447.48" y="551.50" width="1" height="120.50" fill="#fff" fill-opacity="0.45"/>
<rect x="1455.33" y="551.50" width="1" height="120.50" fill="#fff" fill-opacity="0.45"/>
<rect x="1463.17" y="551.50" width="1" height="120.50" fill="#fff" fill-opacity="0.45"/>
<rect x="1471.02" y="551.50" width="1" height="120.50" fill="#fff" fill-opacity="0.45"/>
<rect x="1478.86" y="551.50" width="1" height="120.50" fill="#fff" fill-opacity="0.45"/>
<rect x="1486.70" y="551.50" width="1" height="120.50" fill="#fff" fill-opacity="0.45"/>
<rect x="1494.55" y="551.50" width="1" height="120.50" fill="#fff" fill-opacity="0.45"/>
<rect x="1502.39" y="551.50" width="1" height="120.50" fill="#fff" fill-opacity="0.45"/>
<rect x="1510.23" y="551.50" width="1" height="120.50" fill="#fff" fill-opacity="0.45"/>
<rect x="1518.08" y="551.50" width="1" height="120.50" fill="#fff" fill-opacity="0.45"/>
<rect x="1525.92" y="551.50" width="1" height="120.50" fill="#fff" fill-opacity="0.45"/>
<rect x="1533.77" y="551.50" width="1" height="120.50" fill="#fff" fill-opacity="0.45"/>
<rect x="1541.61" y="551.50" width="1" height="120.50" fill="#fff" fill-opacity="0.45"/>
<rect x="1549.45" y="551.50" width="1" height="120.50" fill="#fff" fill-opacity="0.45"/>
<rect x="1557.30" y="551.50" width="1" height="120.50" fill="#fff" fill-opacity="0.45"/>
<rect x="1565.14" y="551.50" width="1" height="120.50" fill="#fff" fill-opacity="0.45"/>
<rect x="1572.98" y="551.50" width="1" height="120.50" fill="#fff" fill-opacity="0.45"/>
<rect x="1580.83" y="551.50" width="1" height="120.50" fill="#fff" fill-opacity="0.45"/>
<rect x="1588.67" y="551.50" width="1" height="120.50" fill="#fff" fill-opacity="0.45"/>
<rect x="1596.52" y="551.50" width="1" height="120.50" fill="#fff" fill-opacity="0.45"/>
<rect x="1604.36" y="551.50" width="1" height="120.50" fill="#fff" fill-opacity="0.45"/>
<rect x="1612.20" y="551.50" width="1" height="120.50" fill="#fff" fill-opacity="0.45"/>
<rect x="1620.05" y="551.50" width="1" height="120.50" fill="#fff" fill-opacity="0.45"/>
<rect x="1627.89" y="551.50" width="1" height="120.50" fill="#fff" fill-opacity="0.45"/>
<rect x="1635.73" y="551.50" width="1" height="120.50" fill="#fff" fill-opacity="0.45"/>
<rect x="1643.58" y="551.50" width="1" height="120.50" fill="#fff" fill-opacity="0.45"/>
</g>
<rect x="140" y="69.5" width="2" height="603.5" fill="#6e6e6e"/>
<rect x="142.0" y="672.4" width="2259.5" height="2" fill="#6e6e6e"/>
<rect x="130" y="671.50" width="10" height="1" fill="#a8a8a8"/>
<rect x="130" y="551.00" width="10" height="1" fill="#a8a8a8"/>
<rect x="130" y="430.50" width="10" height="1" fill="#a8a8a8"/>
<rect x="130" y="310.00" width="10" height="1" fill="#a8a8a8"/>
<rect x="130" y="189.50" width="10" height="1" fill="#a8a8a8"/>
<rect x="130" y="69.00" width="10" height="1" fill="#a8a8a8"/>
<rect x="141.50" y="674.4" width="1" height="9.5" fill="#b0b0b0"/>
<rect x="235.62" y="674.4" width="1" height="9.5" fill="#b0b0b0"/>
<rect x="329.75" y="674.4" width="1" height="9.5" fill="#b0b0b0"/>
<rect x="423.88" y="674.4" width="1" height="9.5" fill="#b0b0b0"/>
<rect x="518.00" y="674.4" width="1" height="9.5" fill="#b0b0b0"/>
<rect x="612.12" y="674.4" width="1" height="9.5" fill="#b0b0b0"/>
<rect x="706.25" y="674.4" width="1" height="9.5" fill="#b0b0b0"/>
<rect x="800.38" y="674.4" width="1" height="9.5" fill="#b0b0b0"/>
<rect x="894.50" y="674.4" width="1" height="9.5" fill="#b0b0b0"/>
<rect x="988.62" y="674.4" width="1" height="9.5" fill="#b0b0b0"/>
<rect x="1082.75" y="674.4" width="1" height="9.5" fill="#b0b0b0"/>
<rect x="1176.88" y="674.4" width="1" height="9.5" fill="#b0b0b0"/>
<rect x="1271.00" y="674.4" width="1" height="9.5" fill="#b0b0b0"/>
<rect x="1365.12" y="674.4" width="1" height="9.5" fill="#b0b0b0"/>
<rect x="1459.25" y="674.4" width="1" height="9.5" fill="#b0b0b0"/>
<rect x="1553.38" y="674.4" width="1" height="9.5" fill="#b0b0b0"/>
<rect x="1647.50" y="674.4" width="1" height="9.5" fill="#b0b0b0"/>
<rect x="1741.62" y="674.4" width="1" height="9.5" fill="#b0b0b0"/>
<rect x="1835.75" y="674.4" width="1" height="9.5" fill="#b0b0b0"/>
<rect x="1929.88" y="674.4" width="1" height="9.5" fill="#b0b0b0"/>
<rect x="2024.00" y="674.4" width="1" height="9.5" fill="#b0b0b0"/>
<rect x="2118.12" y="674.4" width="1" height="9.5" fill="#b0b0b0"/>
<rect x="2212.25" y="674.4" width="1" height="9.5" fill="#b0b0b0"/>
<rect x="2306.38" y="674.4" width="1" height="9.5" fill="#b0b0b0"/>
<rect x="2400.50" y="674.4" width="1" height="9.5" fill="#b0b0b0"/>
<text x="119.5" y="678.3" font-size="18" font-weight="400" fill="#333" text-anchor="end" textLength="10.5" lengthAdjust="spacingAndGlyphs" stroke="#333" stroke-width="0.4">0</text>
<text x="119.5" y="557.8" font-size="18" font-weight="400" fill="#333" text-anchor="end" textLength="10.5" lengthAdjust="spacingAndGlyphs" stroke="#333" stroke-width="0.4">1</text>
<text x="119.5" y="437.3" font-size="18" font-weight="400" fill="#333" text-anchor="end" textLength="10.5" lengthAdjust="spacingAndGlyphs" stroke="#333" stroke-width="0.4">2</text>
<text x="119.5" y="316.8" font-size="18" font-weight="400" fill="#333" text-anchor="end" textLength="10.5" lengthAdjust="spacingAndGlyphs" stroke="#333" stroke-width="0.4">3</text>
<text x="119.5" y="196.3" font-size="18" font-weight="400" fill="#333" text-anchor="end" textLength="10.5" lengthAdjust="spacingAndGlyphs" stroke="#333" stroke-width="0.4">4</text>
<text x="119.5" y="75.8" font-size="18" font-weight="400" fill="#333" text-anchor="end" textLength="10.5" lengthAdjust="spacingAndGlyphs" stroke="#333" stroke-width="0.4">5</text>
<text x="142.0" y="706.7" font-size="18" font-weight="400" fill="#111" text-anchor="middle" textLength="23.6" lengthAdjust="spacingAndGlyphs" stroke="#111" stroke-width="0.45">0h</text>
<text x="236.1" y="706.7" font-size="18" font-weight="400" fill="#111" text-anchor="middle" textLength="23.6" lengthAdjust="spacingAndGlyphs" stroke="#111" stroke-width="0.45">1h</text>
<text x="330.2" y="706.7" font-size="18" font-weight="400" fill="#111" text-anchor="middle" textLength="23.6" lengthAdjust="spacingAndGlyphs" stroke="#111" stroke-width="0.45">2h</text>
<text x="424.4" y="706.7" font-size="18" font-weight="400" fill="#111" text-anchor="middle" textLength="23.6" lengthAdjust="spacingAndGlyphs" stroke="#111" stroke-width="0.45">3h</text>
<text x="518.5" y="706.7" font-size="18" font-weight="400" fill="#111" text-anchor="middle" textLength="23.6" lengthAdjust="spacingAndGlyphs" stroke="#111" stroke-width="0.45">4h</text>
<text x="612.6" y="706.7" font-size="18" font-weight="400" fill="#111" text-anchor="middle" textLength="23.6" lengthAdjust="spacingAndGlyphs" stroke="#111" stroke-width="0.45">5h</text>
<text x="706.8" y="706.7" font-size="18" font-weight="400" fill="#111" text-anchor="middle" textLength="23.6" lengthAdjust="spacingAndGlyphs" stroke="#111" stroke-width="0.45">6h</text>
<text x="800.9" y="706.7" font-size="18" font-weight="400" fill="#111" text-anchor="middle" textLength="23.6" lengthAdjust="spacingAndGlyphs" stroke="#111" stroke-width="0.45">7h</text>
<text x="895.0" y="706.7" font-size="18" font-weight="400" fill="#111" text-anchor="middle" textLength="23.6" lengthAdjust="spacingAndGlyphs" stroke="#111" stroke-width="0.45">8h</text>
<text x="989.1" y="706.7" font-size="18" font-weight="400" fill="#111" text-anchor="middle" textLength="23.6" lengthAdjust="spacingAndGlyphs" stroke="#111" stroke-width="0.45">9h</text>
<text x="1083.2" y="706.7" font-size="18" font-weight="400" fill="#111" text-anchor="middle" textLength="36.0" lengthAdjust="spacingAndGlyphs" stroke="#111" stroke-width="0.45">10h</text>
<text x="1177.4" y="706.7" font-size="18" font-weight="400" fill="#111" text-anchor="middle" textLength="36.0" lengthAdjust="spacingAndGlyphs" stroke="#111" stroke-width="0.45">11h</text>
<text x="1271.5" y="706.7" font-size="18" font-weight="400" fill="#111" text-anchor="middle" textLength="36.0" lengthAdjust="spacingAndGlyphs" stroke="#111" stroke-width="0.45">12h</text>
<text x="1365.6" y="706.7" font-size="18" font-weight="400" fill="#111" text-anchor="middle" textLength="36.0" lengthAdjust="spacingAndGlyphs" stroke="#111" stroke-width="0.45">13h</text>
<text x="1459.8" y="706.7" font-size="18" font-weight="400" fill="#111" text-anchor="middle" textLength="36.0" lengthAdjust="spacingAndGlyphs" stroke="#111" stroke-width="0.45">14h</text>
<text x="1553.9" y="706.7" font-size="18" font-weight="400" fill="#111" text-anchor="middle" textLength="36.0" lengthAdjust="spacingAndGlyphs" stroke="#111" stroke-width="0.45">15h</text>
<text x="1648.0" y="706.7" font-size="18" font-weight="400" fill="#111" text-anchor="middle" textLength="36.0" lengthAdjust="spacingAndGlyphs" stroke="#111" stroke-width="0.45">16h</text>
<text x="1742.1" y="706.7" font-size="18" font-weight="400" fill="#111" text-anchor="middle" textLength="36.0" lengthAdjust="spacingAndGlyphs" stroke="#111" stroke-width="0.45">17h</text>
<text x="1836.2" y="706.7" font-size="18" font-weight="400" fill="#111" text-anchor="middle" textLength="36.0" lengthAdjust="spacingAndGlyphs" stroke="#111" stroke-width="0.45">18h</text>
<text x="1930.4" y="706.7" font-size="18" font-weight="400" fill="#111" text-anchor="middle" textLength="36.0" lengthAdjust="spacingAndGlyphs" stroke="#111" stroke-width="0.45">19h</text>
<text x="2024.5" y="706.7" font-size="18" font-weight="400" fill="#111" text-anchor="middle" textLength="36.0" lengthAdjust="spacingAndGlyphs" stroke="#111" stroke-width="0.45">20h</text>
<text x="2118.6" y="706.7" font-size="18" font-weight="400" fill="#111" text-anchor="middle" textLength="36.0" lengthAdjust="spacingAndGlyphs" stroke="#111" stroke-width="0.45">21h</text>
<text x="2212.8" y="706.7" font-size="18" font-weight="400" fill="#111" text-anchor="middle" textLength="36.0" lengthAdjust="spacingAndGlyphs" stroke="#111" stroke-width="0.45">22h</text>
<text x="2306.9" y="706.7" font-size="18" font-weight="400" fill="#111" text-anchor="middle" textLength="36.0" lengthAdjust="spacingAndGlyphs" stroke="#111" stroke-width="0.45">23h</text>
<text x="2401.0" y="706.7" font-size="18" font-weight="400" fill="#111" text-anchor="middle" textLength="23.6" lengthAdjust="spacingAndGlyphs" stroke="#111" stroke-width="0.45">0h</text>
<text transform="translate(85.9,370.7) rotate(-90)" x="0" y="0" font-size="22" fill="#333" text-anchor="middle" textLength="29.4" lengthAdjust="spacingAndGlyphs">kW</text>
<rect x="1048.2" y="542.5" width="521.9" height="69.7" rx="8" fill="#fff" fill-opacity="0.88"/>
<text x="1314.2" y="588.5" font-size="30.5" font-weight="700" fill="#111" text-anchor="middle" textLength="355.2" lengthAdjust="spacingAndGlyphs" >dimanche 12 avril 2026</text>
<rect x="1990.5" y="58" width="415.3" height="39.9" rx="8" fill="#fff"/>
<text x="2198.2" y="89.2" font-size="25.7" font-weight="700" fill="#000" text-anchor="middle" textLength="173.4" lengthAdjust="spacingAndGlyphs" >LHB-site-L654</text>
<rect x="1992.25" y="108.05" width="411.50" height="57.30" rx="9" fill="#fff" stroke="#808080" stroke-width="3.5"/>
<text x="2207.3" y="147.9" font-size="27.6" font-weight="400" fill="#000" text-anchor="middle" textLength="297.9" lengthAdjust="spacingAndGlyphs" xml:space="preserve" stroke="#000" stroke-width="0.3">Consommation: 51 kWh</text>
<rect x="1992.25" y="178.45" width="411.50" height="57.30" rx="9" fill="#fff" stroke="#808080" stroke-width="3.5"/>
<text x="2208.2" y="217.7" font-size="27.6" font-weight="400" fill="#000" text-anchor="middle" textLength="175.2" lengthAdjust="spacingAndGlyphs" xml:space="preserve" stroke="#000" stroke-width="0.3">P Max :  4 kW</text>
<rect x="1992.25" y="248.45" width="411.50" height="57.00" rx="9" fill="#fff" stroke="#808080" stroke-width="3.5"/>
<text x="2208.2" y="287.7" font-size="27.6" font-weight="400" fill="#000" text-anchor="middle" textLength="161.1" lengthAdjust="spacingAndGlyphs" xml:space="preserve" stroke="#000" stroke-width="0.3">P min : 1 kW</text>
<rect x="176.4" y="49.1" width="481.6" height="77.6" fill="#0a0a17"/>
<defs>
<linearGradient id="ecoG" x1="0" y1="0" x2="0" y2="1"><stop offset="0" stop-color="#00f2cc"/><stop offset="0.55" stop-color="#00f2cc"/><stop offset="0.56" stop-color="#00b896"/><stop offset="1" stop-color="#00c8a4"/></linearGradient>
<linearGradient id="tileG" x1="0" y1="0" x2="0" y2="1"><stop offset="0" stop-color="#00cfb2"/><stop offset="1" stop-color="#00b294"/></linearGradient>
<clipPath id="tclip0"><rect x="180.2" y="195.2" width="105.6" height="54.6"/></clipPath>
<clipPath id="tclip1"><rect x="301.9" y="195.9" width="106.1" height="55.9"/></clipPath>
<clipPath id="tclip2"><rect x="424" y="195.9" width="106.1" height="55.9"/></clipPath>
<clipPath id="tclip3"><rect x="544.1" y="195.9" width="106.1" height="55.9"/></clipPath>
</defs>
<defs><linearGradient id="ecoG2" gradientUnits="userSpaceOnUse" x1="0" y1="64" x2="0" y2="112"><stop offset="0" stop-color="#00f0c9"/><stop offset="0.64" stop-color="#00f0c9"/><stop offset="0.645" stop-color="#00b593"/><stop offset="1" stop-color="#00c7a3"/></linearGradient></defs>
<text x="187.5" y="110" font-size="60" font-weight="700" fill="url(#ecoG2)" textLength="84.5" lengthAdjust="spacingAndGlyphs">éco</text>
<path d="M274.3 85.6 L282.9 108 L292.6 87.5 L300.2 108 L314.6 66.2" stroke="#fff" stroke-width="6.6" fill="none" stroke-linecap="round" stroke-linejoin="round"/>
<text x="310.5" y="110" font-size="60" font-weight="700" fill="#fff" textLength="64" lengthAdjust="spacingAndGlyphs">att</text>
<ellipse cx="433.6" cy="89" rx="25.5" ry="28" fill="#00b4e1"/>
<text x="434.6" y="96.5" font-size="23" fill="#fff" text-anchor="middle" textLength="32.5" lengthAdjust="spacingAndGlyphs">Rte</text>
<text x="468.3" y="78.8" font-size="11" font-weight="400" fill="#0aa0d0" text-anchor="start" textLength="48" lengthAdjust="spacingAndGlyphs" stroke="#0aa0d0" stroke-width="0.3">Le réseau</text>
<text x="468.3" y="92.0" font-size="11" font-weight="400" fill="#0aa0d0" text-anchor="start" textLength="61" lengthAdjust="spacingAndGlyphs" stroke="#0aa0d0" stroke-width="0.3">de transport</text>
<text x="468.3" y="105.2" font-size="11" font-weight="400" fill="#0aa0d0" text-anchor="start" textLength="57" lengthAdjust="spacingAndGlyphs" stroke="#0aa0d0" stroke-width="0.3">d’électricité</text>
<rect x="546.7" y="61.3" width="99.9" height="55.4" fill="#fff"/>
<rect x="553.2" y="68.6" width="7.3" height="6.9" fill="#27318f"/><path d="M563.6 68.6 H571.8 V75.5 H563.6 L566 72 Z" fill="#e1001a"/>
<text x="552.7" y="84.8" font-size="7.9" font-weight="700" fill="#1e1e1e" text-anchor="start" textLength="43.7" lengthAdjust="spacingAndGlyphs" >RÉPUBLIQUE</text>
<text x="552.7" y="92.9" font-size="7.9" font-weight="700" fill="#1e1e1e" text-anchor="start" textLength="40.8" lengthAdjust="spacingAndGlyphs" >FRANÇAISE</text>
<text x="553.4" y="100.3" font-size="4.6" font-style="italic" fill="#444" textLength="11.6" lengthAdjust="spacingAndGlyphs">Liberté</text>
<text x="553.4" y="105.3" font-size="4.6" font-style="italic" fill="#444" textLength="11.6" lengthAdjust="spacingAndGlyphs">Égalité</text>
<text x="553.4" y="110.3" font-size="4.6" font-style="italic" fill="#444" textLength="16.6" lengthAdjust="spacingAndGlyphs">Fraternité</text>
<rect x="607.2" y="67" width="34.1" height="44.2" fill="#fff" stroke="#6f98cc" stroke-width="1.4"/>
<text x="624.2" y="74.9" font-size="6.2" font-weight="700" fill="#e2232e" text-anchor="middle" textLength="25.5" lengthAdjust="spacingAndGlyphs" >A D E M E</text>
<circle cx="624" cy="87.2" r="8.8" fill="#1447a0"/>
<path d="M617 84 q2.5 -3.5 5.5 -2.5 q1.5 2.5 -0.5 4.5 q-2 2 0.5 4.5 q1.5 2 -1 3.5 q-3 -1.5 -4.5 -5 Z M626.5 81 q3 1 3.5 3 q-1.5 1 -3 0 Z M627 90 q2.5 -1 4 1 q-1 3 -3.5 3.5 Z" fill="#97a6da"/>
<rect x="611.5" y="99.8" width="25.5" height="1.7" fill="#e2232e" fill-opacity="0.55"/>
<rect x="611.5" y="103.4" width="25.5" height="1.7" fill="#e2232e" fill-opacity="0.55"/>
<rect x="611.5" y="107.0" width="25.5" height="1.7" fill="#e2232e" fill-opacity="0.55"/>
<rect x="169.3" y="135.4" width="491.3" height="123.2" fill="#d9d9d9" fill-opacity="0.97"/>
<rect x="172.4" y="138.5" width="117.0" height="50.7" fill="#f2f2f2"/>
<rect x="172.4" y="194.9" width="117.0" height="58.5" fill="#fff" fill-opacity="0.95"/>
<rect x="294.6" y="138.5" width="117.0" height="50.7" fill="#f2f2f2"/>
<rect x="294.6" y="194.9" width="117.0" height="58.5" fill="#fff" fill-opacity="0.95"/>
<rect x="416.7" y="138.5" width="116.5" height="50.7" fill="#f2f2f2"/>
<rect x="416.7" y="194.9" width="116.5" height="58.5" fill="#fff" fill-opacity="0.95"/>
<rect x="538.4" y="138.5" width="117.0" height="50.7" fill="#f2f2f2"/>
<rect x="538.4" y="194.9" width="117.0" height="58.5" fill="#fff" fill-opacity="0.95"/>
<g clip-path="url(#tclip0)">
<rect x="180.2" y="195.2" width="105.6" height="54.6" fill="url(#tileG)"/>
<path d="M195.20 195.20 Q243.56 234.29 285.80 210.92 L285.80 195.20 Z" fill="#00f0c9"/>
<path d="M208.71 195.20 Q245.67 215.46 285.80 199.02 L285.80 195.20 Z" fill="#00a38b"/>
</g>
<g clip-path="url(#tclip1)">
<rect x="301.9" y="195.9" width="106.1" height="55.9" fill="url(#tileG)"/>
<path d="M316.97 195.90 Q365.56 235.92 408.00 212.00 L408.00 195.90 Z" fill="#00f0c9"/>
<path d="M330.55 195.90 Q367.68 216.64 408.00 199.81 L408.00 195.90 Z" fill="#00a38b"/>
</g>
<g clip-path="url(#tclip2)">
<rect x="424.0" y="195.9" width="106.1" height="55.9" fill="url(#tileG)"/>
<path d="M439.07 195.90 Q487.66 235.92 530.10 212.00 L530.10 195.90 Z" fill="#00f0c9"/>
<path d="M452.65 195.90 Q489.78 216.64 530.10 199.81 L530.10 195.90 Z" fill="#00a38b"/>
</g>
<g clip-path="url(#tclip3)">
<rect x="544.1" y="195.9" width="106.1" height="55.9" fill="url(#tileG)"/>
<path d="M559.17 195.90 Q607.76 235.92 650.20 212.00 L650.20 195.90 Z" fill="#00f0c9"/>
<path d="M572.75 195.90 Q609.88 216.64 650.20 199.81 L650.20 195.90 Z" fill="#00a38b"/>
</g>
<text x="231.3" y="175.2" font-size="33" font-weight="400" fill="#000" text-anchor="middle" textLength="16.7" lengthAdjust="spacingAndGlyphs" >J</text>
<text x="312.2" y="175.2" font-size="33" font-weight="400" fill="#000" text-anchor="start" textLength="17.6" lengthAdjust="spacingAndGlyphs" >J</text>
<path d="M346.4 164.1 H361.4 M353.9 155.2 V173.1" stroke="#000" stroke-width="1.9" fill="none"/>
<path d="M380.9 159.2 L387.5 152.4 V175" stroke="#000" stroke-width="2.3" fill="none"/>
<text x="434.3" y="175.2" font-size="33" font-weight="400" fill="#000" text-anchor="start" textLength="17.1" lengthAdjust="spacingAndGlyphs" >J</text>
<path d="M468.3 164.1 H483.3 M475.8 155.2 V173.1" stroke="#000" stroke-width="1.9" fill="none"/>
<text x="500.1" y="175.2" font-size="33" font-weight="700" fill="#000" text-anchor="start" textLength="17.6" lengthAdjust="spacingAndGlyphs" >2</text>
<text x="556" y="175.2" font-size="33" font-weight="400" fill="#000" text-anchor="start" textLength="17.6" lengthAdjust="spacingAndGlyphs" >J</text>
<path d="M590.5 164.1 H605.5 M598.0 155.2 V173.1" stroke="#000" stroke-width="1.9" fill="none"/>
<text x="621.8" y="175.2" font-size="33" font-weight="700" fill="#000" text-anchor="start" textLength="17.5" lengthAdjust="spacingAndGlyphs" >3</text>
<rect x="170.2" y="817.3" width="2249.05" height="506.60" fill="#000" fill-opacity="0.45" filter="url(#shblur)"/>
<rect x="168.2" y="815.3" width="2248.05" height="505.10" fill="#efefef"/>
<rect x="489.35" y="1219.38" width="321.15" height="50.51" fill="#fff"/>
<rect x="1131.65" y="1219.38" width="321.15" height="50.51" fill="#fff"/>
<rect x="1773.95" y="1219.38" width="321.15" height="50.51" fill="#fff"/>
<rect x="488.85" y="1219.38" width="1" height="50.51" fill="#bfbfbf"/>
<rect x="810.00" y="1219.38" width="1" height="50.51" fill="#bfbfbf"/>
<rect x="1131.15" y="1219.38" width="1" height="50.51" fill="#bfbfbf"/>
<rect x="1452.30" y="1219.38" width="1" height="50.51" fill="#bfbfbf"/>
<rect x="1773.45" y="1219.38" width="1" height="50.51" fill="#bfbfbf"/>
<rect x="2094.60" y="1219.38" width="1" height="50.51" fill="#bfbfbf"/>
<rect x="489.35" y="1118.36" width="321.15" height="50.51" fill="#fff"/>
<rect x="1131.65" y="1118.36" width="321.15" height="50.51" fill="#fff"/>
<rect x="1773.95" y="1118.36" width="321.15" height="50.51" fill="#fff"/>
<rect x="488.85" y="1118.36" width="1" height="50.51" fill="#bfbfbf"/>
<rect x="810.00" y="1118.36" width="1" height="50.51" fill="#bfbfbf"/>
<rect x="1131.15" y="1118.36" width="1" height="50.51" fill="#bfbfbf"/>
<rect x="1452.30" y="1118.36" width="1" height="50.51" fill="#bfbfbf"/>
<rect x="1773.45" y="1118.36" width="1" height="50.51" fill="#bfbfbf"/>
<rect x="2094.60" y="1118.36" width="1" height="50.51" fill="#bfbfbf"/>
<rect x="489.35" y="1017.34" width="321.15" height="50.51" fill="#fff"/>
<rect x="1131.65" y="1017.34" width="321.15" height="50.51" fill="#fff"/>
<rect x="1773.95" y="1017.34" width="321.15" height="50.51" fill="#fff"/>
<rect x="488.85" y="1017.34" width="1" height="50.51" fill="#bfbfbf"/>
<rect x="810.00" y="1017.34" width="1" height="50.51" fill="#bfbfbf"/>
<rect x="1131.15" y="1017.34" width="1" height="50.51" fill="#bfbfbf"/>
<rect x="1452.30" y="1017.34" width="1" height="50.51" fill="#bfbfbf"/>
<rect x="1773.45" y="1017.34" width="1" height="50.51" fill="#bfbfbf"/>
<rect x="2094.60" y="1017.34" width="1" height="50.51" fill="#bfbfbf"/>
<rect x="489.35" y="916.32" width="321.15" height="50.51" fill="#fff"/>
<rect x="1131.65" y="916.32" width="321.15" height="50.51" fill="#fff"/>
<rect x="1773.95" y="916.32" width="321.15" height="50.51" fill="#fff"/>
<rect x="488.85" y="916.32" width="1" height="50.51" fill="#bfbfbf"/>
<rect x="810.00" y="916.32" width="1" height="50.51" fill="#bfbfbf"/>
<rect x="1131.15" y="916.32" width="1" height="50.51" fill="#bfbfbf"/>
<rect x="1452.30" y="916.32" width="1" height="50.51" fill="#bfbfbf"/>
<rect x="1773.45" y="916.32" width="1" height="50.51" fill="#bfbfbf"/>
<rect x="2094.60" y="916.32" width="1" height="50.51" fill="#bfbfbf"/>
<rect x="489.35" y="815.30" width="321.15" height="50.51" fill="#fff"/>
<rect x="1131.65" y="815.30" width="321.15" height="50.51" fill="#fff"/>
<rect x="1773.95" y="815.30" width="321.15" height="50.51" fill="#fff"/>
<rect x="488.85" y="815.30" width="1" height="50.51" fill="#bfbfbf"/>
<rect x="810.00" y="815.30" width="1" height="50.51" fill="#bfbfbf"/>
<rect x="1131.15" y="815.30" width="1" height="50.51" fill="#bfbfbf"/>
<rect x="1452.30" y="815.30" width="1" height="50.51" fill="#bfbfbf"/>
<rect x="1773.45" y="815.30" width="1" height="50.51" fill="#bfbfbf"/>
<rect x="2094.60" y="815.30" width="1" height="50.51" fill="#bfbfbf"/>
<rect x="168.2" y="1319.90" width="2248.05" height="1" fill="#bfbfbf"/>
<rect x="168.2" y="1269.39" width="2248.05" height="1" fill="#bfbfbf"/>
<rect x="168.2" y="1218.88" width="2248.05" height="1" fill="#bfbfbf"/>
<rect x="168.2" y="1168.37" width="2248.05" height="1" fill="#bfbfbf"/>
<rect x="168.2" y="1117.86" width="2248.05" height="1" fill="#bfbfbf"/>
<rect x="168.2" y="1067.35" width="2248.05" height="1" fill="#bfbfbf"/>
<rect x="168.2" y="1016.84" width="2248.05" height="1" fill="#bfbfbf"/>
<rect x="168.2" y="966.33" width="2248.05" height="1" fill="#bfbfbf"/>
<rect x="168.2" y="915.82" width="2248.05" height="1" fill="#bfbfbf"/>
<rect x="168.2" y="865.31" width="2248.05" height="1" fill="#bfbfbf"/>
<rect x="168.2" y="814.80" width="2248.05" height="1" fill="#bfbfbf"/>
<g>
<rect x="809.38" y="1315.35" width="2.23" height="5.05" fill="#a0ecc2"/>
<rect x="811.62" y="1315.35" width="2.23" height="5.05" fill="#a0ecc2"/>
<rect x="813.85" y="1315.35" width="2.23" height="5.05" fill="#a0ecc2"/>
<rect x="816.08" y="1315.35" width="2.23" height="5.05" fill="#a0ecc2"/>
<rect x="818.31" y="1315.35" width="2.23" height="5.05" fill="#a0ecc2"/>
<rect x="820.54" y="1315.35" width="2.23" height="5.05" fill="#a0ecc2"/>
<rect x="822.77" y="1315.35" width="2.23" height="5.05" fill="#a0ecc2"/>
<rect x="825.00" y="1315.35" width="2.23" height="5.05" fill="#a0ecc2"/>
<rect x="827.23" y="1315.35" width="2.23" height="5.05" fill="#a0ecc2"/>
<rect x="829.46" y="1315.35" width="2.23" height="5.05" fill="#a0ecc2"/>
<rect x="831.69" y="1315.35" width="2.23" height="5.05" fill="#a0ecc2"/>
<rect x="833.92" y="1315.35" width="2.23" height="5.05" fill="#a0ecc2"/>
<rect x="836.15" y="1315.35" width="2.23" height="5.05" fill="#a0ecc2"/>
<rect x="838.38" y="1315.35" width="2.23" height="5.05" fill="#a0ecc2"/>
<rect x="840.61" y="1315.35" width="2.23" height="5.05" fill="#a0ecc2"/>
<rect x="842.84" y="1315.35" width="2.23" height="5.05" fill="#a0ecc2"/>
<rect x="845.07" y="1315.35" width="2.23" height="5.05" fill="#a0ecc2"/>
<rect x="847.30" y="1310.30" width="2.23" height="10.10" fill="#a0ecc2"/>
<rect x="849.53" y="1315.35" width="2.23" height="5.05" fill="#a0ecc2"/>
<rect x="851.76" y="1310.30" width="2.23" height="10.10" fill="#a0ecc2"/>
<rect x="853.99" y="1315.35" width="2.23" height="5.05" fill="#a0ecc2"/>
<rect x="856.22" y="1315.35" width="2.23" height="5.05" fill="#a0ecc2"/>
<rect x="858.45" y="1310.30" width="2.23" height="10.10" fill="#a0ecc2"/>
<rect x="860.68" y="1315.35" width="2.23" height="5.05" fill="#a0ecc2"/>
<rect x="862.91" y="1310.30" width="2.23" height="10.10" fill="#a0ecc2"/>
<rect x="865.14" y="1315.35" width="2.23" height="5.05" fill="#a0ecc2"/>
<rect x="867.37" y="1315.35" width="2.23" height="5.05" fill="#a0ecc2"/>
<rect x="869.60" y="1315.35" width="2.23" height="5.05" fill="#a0ecc2"/>
<rect x="871.83" y="1310.30" width="2.23" height="10.10" fill="#a0ecc2"/>
<rect x="874.06" y="1315.35" width="2.23" height="5.05" fill="#a0ecc2"/>
<rect x="876.29" y="1310.30" width="2.23" height="10.10" fill="#a0ecc2"/>
<rect x="878.52" y="1315.35" width="2.23" height="5.05" fill="#a0ecc2"/>
<rect x="880.75" y="1315.35" width="2.23" height="5.05" fill="#a0ecc2"/>
<rect x="882.98" y="1310.30" width="2.23" height="10.10" fill="#a0ecc2"/>
<rect x="885.21" y="1310.30" width="2.23" height="10.10" fill="#a0ecc2"/>
<rect x="887.44" y="1315.35" width="2.23" height="5.05" fill="#a0ecc2"/>
<rect x="889.67" y="1315.35" width="2.23" height="5.05" fill="#a0ecc2"/>
<rect x="891.90" y="1315.35" width="2.23" height="5.05" fill="#a0ecc2"/>
<rect x="894.13" y="1315.35" width="2.23" height="5.05" fill="#a0ecc2"/>
<rect x="896.36" y="1315.35" width="2.23" height="5.05" fill="#a0ecc2"/>
<rect x="898.59" y="1315.35" width="2.23" height="5.05" fill="#a0ecc2"/>
<rect x="900.82" y="1315.35" width="2.23" height="5.05" fill="#a0ecc2"/>
<rect x="903.05" y="1315.35" width="2.23" height="5.05" fill="#a0ecc2"/>
<rect x="905.28" y="1315.35" width="2.23" height="5.05" fill="#a0ecc2"/>
<rect x="907.51" y="1315.35" width="2.23" height="5.05" fill="#a0ecc2"/>
<rect x="909.74" y="1315.35" width="2.23" height="5.05" fill="#a0ecc2"/>
<rect x="911.97" y="1315.35" width="2.23" height="5.05" fill="#a0ecc2"/>
<rect x="914.20" y="1315.35" width="2.23" height="5.05" fill="#a0ecc2"/>
<rect x="916.43" y="1315.35" width="2.23" height="5.05" fill="#a0ecc2"/>
<rect x="918.67" y="1315.35" width="2.23" height="5.05" fill="#a0ecc2"/>
<rect x="920.90" y="1315.35" width="2.23" height="5.05" fill="#a0ecc2"/>
<rect x="923.13" y="1315.35" width="2.23" height="5.05" fill="#a0ecc2"/>
<rect x="925.36" y="1315.35" width="2.23" height="5.05" fill="#a0ecc2"/>
<rect x="927.59" y="1315.35" width="2.23" height="5.05" fill="#a0ecc2"/>
<rect x="929.82" y="1315.35" width="2.23" height="5.05" fill="#a0ecc2"/>
<rect x="932.05" y="1315.35" width="2.23" height="5.05" fill="#a0ecc2"/>
<rect x="934.28" y="1315.35" width="2.23" height="5.05" fill="#a0ecc2"/>
<rect x="936.51" y="1315.35" width="2.23" height="5.05" fill="#a0ecc2"/>
<rect x="938.74" y="1315.35" width="2.23" height="5.05" fill="#a0ecc2"/>
<rect x="940.97" y="1315.35" width="2.23" height="5.05" fill="#a0ecc2"/>
<rect x="943.20" y="1315.35" width="2.23" height="5.05" fill="#a0ecc2"/>
<rect x="945.43" y="1315.35" width="2.23" height="5.05" fill="#a0ecc2"/>
<rect x="947.66" y="1315.35" width="2.23" height="5.05" fill="#a0ecc2"/>
<rect x="949.89" y="1315.35" width="2.23" height="5.05" fill="#a0ecc2"/>
<rect x="952.12" y="1315.35" width="2.23" height="5.05" fill="#a0ecc2"/>
<rect x="954.35" y="1315.35" width="2.23" height="5.05" fill="#a0ecc2"/>
<rect x="956.58" y="1315.35" width="2.23" height="5.05" fill="#a0ecc2"/>
<rect x="958.81" y="1315.35" width="2.23" height="5.05" fill="#a0ecc2"/>
<rect x="961.04" y="1315.35" width="2.23" height="5.05" fill="#a0ecc2"/>
<rect x="963.27" y="1315.35" width="2.23" height="5.05" fill="#a0ecc2"/>
<rect x="965.50" y="1315.35" width="2.23" height="5.05" fill="#a0ecc2"/>
<rect x="967.73" y="1315.35" width="2.23" height="5.05" fill="#a0ecc2"/>
<rect x="969.96" y="1315.35" width="2.23" height="5.05" fill="#a0ecc2"/>
<rect x="972.19" y="1315.35" width="2.23" height="5.05" fill="#a0ecc2"/>
<rect x="974.42" y="1315.35" width="2.23" height="5.05" fill="#a0ecc2"/>
<rect x="976.65" y="1315.35" width="2.23" height="5.05" fill="#a0ecc2"/>
<rect x="978.88" y="1315.35" width="2.23" height="5.05" fill="#a0ecc2"/>
<rect x="981.11" y="1315.35" width="2.23" height="5.05" fill="#a0ecc2"/>
<rect x="983.34" y="1315.35" width="2.23" height="5.05" fill="#a0ecc2"/>
<rect x="985.57" y="1315.35" width="2.23" height="5.05" fill="#a0ecc2"/>
<rect x="987.80" y="1315.35" width="2.23" height="5.05" fill="#a0ecc2"/>
<rect x="990.03" y="1315.35" width="2.23" height="5.05" fill="#a0ecc2"/>
<rect x="992.26" y="1315.35" width="2.23" height="5.05" fill="#a0ecc2"/>
<rect x="994.49" y="1315.35" width="2.23" height="5.05" fill="#a0ecc2"/>
<rect x="996.72" y="1315.35" width="2.23" height="5.05" fill="#a0ecc2"/>
<rect x="998.95" y="1315.35" width="2.23" height="5.05" fill="#a0ecc2"/>
<rect x="1001.18" y="1315.35" width="2.23" height="5.05" fill="#a0ecc2"/>
<rect x="1003.41" y="1315.35" width="2.23" height="5.05" fill="#a0ecc2"/>
<rect x="1005.64" y="1315.35" width="2.23" height="5.05" fill="#a0ecc2"/>
<rect x="1007.87" y="1315.35" width="2.23" height="5.05" fill="#a0ecc2"/>
<rect x="1010.10" y="1315.35" width="2.23" height="5.05" fill="#a0ecc2"/>
<rect x="1012.33" y="1315.35" width="2.23" height="5.05" fill="#a0ecc2"/>
<rect x="1014.56" y="1315.35" width="2.23" height="5.05" fill="#a0ecc2"/>
<rect x="1016.79" y="1315.35" width="2.23" height="5.05" fill="#a0ecc2"/>
<rect x="1019.02" y="1315.35" width="2.23" height="5.05" fill="#a0ecc2"/>
<rect x="1021.25" y="1315.35" width="2.23" height="5.05" fill="#a0ecc2"/>
<rect x="1023.48" y="1315.35" width="2.23" height="5.05" fill="#a0ecc2"/>
<rect x="1025.72" y="1315.35" width="2.23" height="5.05" fill="#a0ecc2"/>
<rect x="1027.95" y="1315.35" width="2.23" height="5.05" fill="#a0ecc2"/>
<rect x="1030.18" y="1315.35" width="2.23" height="5.05" fill="#a0ecc2"/>
<rect x="1032.41" y="1315.35" width="2.23" height="5.05" fill="#a0ecc2"/>
<rect x="1034.64" y="1315.35" width="2.23" height="5.05" fill="#a0ecc2"/>
<rect x="1036.87" y="1229.48" width="2.23" height="90.92" fill="#a0ecc2"/>
<rect x="1039.10" y="1285.04" width="2.23" height="35.36" fill="#a0ecc2"/>
<rect x="1041.33" y="1310.30" width="2.23" height="10.10" fill="#a0ecc2"/>
<rect x="1043.56" y="1315.35" width="2.23" height="5.05" fill="#a0ecc2"/>
<rect x="1045.79" y="1315.35" width="2.23" height="5.05" fill="#a0ecc2"/>
<rect x="1048.02" y="1315.35" width="2.23" height="5.05" fill="#a0ecc2"/>
<rect x="1050.25" y="1315.35" width="2.23" height="5.05" fill="#a0ecc2"/>
<rect x="1052.48" y="1315.35" width="2.23" height="5.05" fill="#a0ecc2"/>
<rect x="1054.71" y="1315.35" width="2.23" height="5.05" fill="#a0ecc2"/>
<rect x="1056.94" y="1315.35" width="2.23" height="5.05" fill="#a0ecc2"/>
<rect x="1059.17" y="1315.35" width="2.23" height="5.05" fill="#a0ecc2"/>
<rect x="1061.40" y="1315.35" width="2.23" height="5.05" fill="#a0ecc2"/>
<rect x="1063.63" y="1315.35" width="2.23" height="5.05" fill="#a0ecc2"/>
<rect x="1065.86" y="1315.35" width="2.23" height="5.05" fill="#a0ecc2"/>
<rect x="1068.09" y="1315.35" width="2.23" height="5.05" fill="#a0ecc2"/>
<rect x="1070.32" y="1315.35" width="2.23" height="5.05" fill="#a0ecc2"/>
<rect x="1072.55" y="1315.35" width="2.23" height="5.05" fill="#a0ecc2"/>
<rect x="1074.78" y="1315.35" width="2.23" height="5.05" fill="#a0ecc2"/>
<rect x="1077.01" y="1315.35" width="2.23" height="5.05" fill="#a0ecc2"/>
<rect x="1079.24" y="1315.35" width="2.23" height="5.05" fill="#a0ecc2"/>
<rect x="1081.47" y="1315.35" width="2.23" height="5.05" fill="#a0ecc2"/>
<rect x="1083.70" y="1315.35" width="2.23" height="5.05" fill="#a0ecc2"/>
<rect x="1085.93" y="1315.35" width="2.23" height="5.05" fill="#a0ecc2"/>
<rect x="1088.16" y="1315.35" width="2.23" height="5.05" fill="#a0ecc2"/>
<rect x="1090.39" y="1315.35" width="2.23" height="5.05" fill="#a0ecc2"/>
<rect x="1092.62" y="1315.35" width="2.23" height="5.05" fill="#a0ecc2"/>
<rect x="1094.85" y="1315.35" width="2.23" height="5.05" fill="#a0ecc2"/>
<rect x="1097.08" y="1315.35" width="2.23" height="5.05" fill="#a0ecc2"/>
<rect x="1099.31" y="1315.35" width="2.23" height="5.05" fill="#a0ecc2"/>
<rect x="1101.54" y="1315.35" width="2.23" height="5.05" fill="#a0ecc2"/>
<rect x="1103.77" y="1315.35" width="2.23" height="5.05" fill="#a0ecc2"/>
<rect x="1106.00" y="1315.35" width="2.23" height="5.05" fill="#a0ecc2"/>
<rect x="1108.23" y="1315.35" width="2.23" height="5.05" fill="#a0ecc2"/>
<rect x="1110.46" y="1315.35" width="2.23" height="5.05" fill="#a0ecc2"/>
<rect x="1112.69" y="1315.35" width="2.23" height="5.05" fill="#a0ecc2"/>
<rect x="1114.92" y="1315.35" width="2.23" height="5.05" fill="#a0ecc2"/>
<rect x="1117.15" y="1315.35" width="2.23" height="5.05" fill="#a0ecc2"/>
<rect x="1119.38" y="1315.35" width="2.23" height="5.05" fill="#a0ecc2"/>
<rect x="1121.61" y="1315.35" width="2.23" height="5.05" fill="#a0ecc2"/>
<rect x="1123.84" y="1315.35" width="2.23" height="5.05" fill="#a0ecc2"/>
<rect x="1126.07" y="1315.35" width="2.23" height="5.05" fill="#a0ecc2"/>
<rect x="1128.30" y="1305.25" width="2.23" height="15.15" fill="#a0ecc2"/>
<rect x="1130.53" y="1315.35" width="2.23" height="5.05" fill="#a0ecc2"/>
<rect x="1132.77" y="1315.35" width="2.23" height="5.05" fill="#a0ecc2"/>
<rect x="1135.00" y="1315.35" width="2.23" height="5.05" fill="#a0ecc2"/>
<rect x="1137.23" y="1315.35" width="2.23" height="5.05" fill="#a0ecc2"/>
<rect x="1139.46" y="1315.35" width="2.23" height="5.05" fill="#a0ecc2"/>
<rect x="1141.69" y="1315.35" width="2.23" height="5.05" fill="#a0ecc2"/>
<rect x="1143.92" y="1315.35" width="2.23" height="5.05" fill="#a0ecc2"/>
<rect x="1146.15" y="1315.35" width="2.23" height="5.05" fill="#a0ecc2"/>
<rect x="1148.38" y="1315.35" width="2.23" height="5.05" fill="#a0ecc2"/>
<rect x="1150.61" y="1315.35" width="2.23" height="5.05" fill="#a0ecc2"/>
<rect x="1152.84" y="1315.35" width="2.23" height="5.05" fill="#a0ecc2"/>
<rect x="1155.07" y="1315.35" width="2.23" height="5.05" fill="#a0ecc2"/>
<rect x="1157.30" y="1315.35" width="2.23" height="5.05" fill="#a0ecc2"/>
<rect x="1159.53" y="1315.35" width="2.23" height="5.05" fill="#a0ecc2"/>
<rect x="1161.76" y="1315.35" width="2.23" height="5.05" fill="#a0ecc2"/>
<rect x="1163.99" y="1315.35" width="2.23" height="5.05" fill="#a0ecc2"/>
<rect x="1166.22" y="1310.30" width="2.23" height="10.10" fill="#a0ecc2"/>
<rect x="1168.45" y="1315.35" width="2.23" height="5.05" fill="#a0ecc2"/>
<rect x="1170.68" y="1315.35" width="2.23" height="5.05" fill="#a0ecc2"/>
<rect x="1172.91" y="1315.35" width="2.23" height="5.05" fill="#a0ecc2"/>
<rect x="1175.14" y="1315.35" width="2.23" height="5.05" fill="#a0ecc2"/>
<rect x="1177.37" y="1310.30" width="2.23" height="10.10" fill="#a0ecc2"/>
<rect x="1179.60" y="1315.35" width="2.23" height="5.05" fill="#a0ecc2"/>
<rect x="1181.83" y="1315.35" width="2.23" height="5.05" fill="#a0ecc2"/>
<rect x="1184.06" y="1315.35" width="2.23" height="5.05" fill="#a0ecc2"/>
<rect x="1186.29" y="1305.25" width="2.23" height="15.15" fill="#a0ecc2"/>
<rect x="1188.52" y="1315.35" width="2.23" height="5.05" fill="#a0ecc2"/>
<rect x="1190.75" y="1310.30" width="2.23" height="10.10" fill="#a0ecc2"/>
<rect x="1192.98" y="1315.35" width="2.23" height="5.05" fill="#a0ecc2"/>
<rect x="1195.21" y="1310.30" width="2.23" height="10.10" fill="#a0ecc2"/>
<rect x="1197.44" y="1315.35" width="2.23" height="5.05" fill="#a0ecc2"/>
<rect x="1199.67" y="1315.35" width="2.23" height="5.05" fill="#a0ecc2"/>
<rect x="1201.90" y="1310.30" width="2.23" height="10.10" fill="#a0ecc2"/>
<rect x="1204.13" y="1315.35" width="2.23" height="5.05" fill="#a0ecc2"/>
<rect x="1206.36" y="1310.30" width="2.23" height="10.10" fill="#a0ecc2"/>
<rect x="1208.59" y="1315.35" width="2.23" height="5.05" fill="#a0ecc2"/>
<rect x="1210.82" y="1315.35" width="2.23" height="5.05" fill="#a0ecc2"/>
<rect x="1213.05" y="1315.35" width="2.23" height="5.05" fill="#a0ecc2"/>
<rect x="1215.28" y="1315.35" width="2.23" height="5.05" fill="#a0ecc2"/>
<rect x="1217.51" y="1315.35" width="2.23" height="5.05" fill="#a0ecc2"/>
<rect x="1219.74" y="1315.35" width="2.23" height="5.05" fill="#a0ecc2"/>
<rect x="1221.97" y="1315.35" width="2.23" height="5.05" fill="#a0ecc2"/>
<rect x="1224.20" y="1315.35" width="2.23" height="5.05" fill="#a0ecc2"/>
<rect x="1226.43" y="1315.35" width="2.23" height="5.05" fill="#a0ecc2"/>
<rect x="1228.66" y="1315.35" width="2.23" height="5.05" fill="#a0ecc2"/>
<rect x="1230.89" y="1315.35" width="2.23" height="5.05" fill="#a0ecc2"/>
<rect x="1233.12" y="1315.35" width="2.23" height="5.05" fill="#a0ecc2"/>
<rect x="1235.35" y="1315.35" width="2.23" height="5.05" fill="#a0ecc2"/>
<rect x="1237.58" y="1315.35" width="2.23" height="5.05" fill="#a0ecc2"/>
<rect x="1239.82" y="1315.35" width="2.23" height="5.05" fill="#a0ecc2"/>
<rect x="1242.05" y="1315.35" width="2.23" height="5.05" fill="#a0ecc2"/>
<rect x="1244.28" y="1315.35" width="2.23" height="5.05" fill="#a0ecc2"/>
<rect x="1246.51" y="1315.35" width="2.23" height="5.05" fill="#a0ecc2"/>
<rect x="1248.74" y="1315.35" width="2.23" height="5.05" fill="#a0ecc2"/>
<rect x="1250.97" y="1315.35" width="2.23" height="5.05" fill="#a0ecc2"/>
<rect x="1253.20" y="1315.35" width="2.23" height="5.05" fill="#a0ecc2"/>
<rect x="1255.43" y="1315.35" width="2.23" height="5.05" fill="#a0ecc2"/>
<rect x="1257.66" y="1315.35" width="2.23" height="5.05" fill="#a0ecc2"/>
<rect x="1259.89" y="1315.35" width="2.23" height="5.05" fill="#a0ecc2"/>
<rect x="1262.12" y="1315.35" width="2.23" height="5.05" fill="#a0ecc2"/>
<rect x="1264.35" y="1315.35" width="2.23" height="5.05" fill="#a0ecc2"/>
<rect x="1266.58" y="1315.35" width="2.23" height="5.05" fill="#a0ecc2"/>
<rect x="1268.81" y="1315.35" width="2.23" height="5.05" fill="#a0ecc2"/>
<rect x="1271.04" y="1315.35" width="2.23" height="5.05" fill="#a0ecc2"/>
<rect x="1273.27" y="1315.35" width="2.23" height="5.05" fill="#a0ecc2"/>
<rect x="1275.50" y="1315.35" width="2.23" height="5.05" fill="#a0ecc2"/>
<rect x="1277.73" y="1315.35" width="2.23" height="5.05" fill="#a0ecc2"/>
<rect x="1279.96" y="1315.35" width="2.23" height="5.05" fill="#a0ecc2"/>
<rect x="1282.19" y="1315.35" width="2.23" height="5.05" fill="#a0ecc2"/>
<rect x="1284.42" y="1315.35" width="2.23" height="5.05" fill="#a0ecc2"/>
<rect x="1286.65" y="1315.35" width="2.23" height="5.05" fill="#a0ecc2"/>
<rect x="1288.88" y="1315.35" width="2.23" height="5.05" fill="#a0ecc2"/>
<rect x="1291.11" y="1315.35" width="2.23" height="5.05" fill="#a0ecc2"/>
<rect x="1293.34" y="1315.35" width="2.23" height="5.05" fill="#a0ecc2"/>
<rect x="1295.57" y="1315.35" width="2.23" height="5.05" fill="#a0ecc2"/>
<rect x="1297.80" y="1315.35" width="2.23" height="5.05" fill="#a0ecc2"/>
<rect x="1300.03" y="1315.35" width="2.23" height="5.05" fill="#a0ecc2"/>
<rect x="1302.26" y="1315.35" width="2.23" height="5.05" fill="#a0ecc2"/>
<rect x="1304.49" y="1315.35" width="2.23" height="5.05" fill="#a0ecc2"/>
<rect x="1306.72" y="1315.35" width="2.23" height="5.05" fill="#a0ecc2"/>
<rect x="1308.95" y="1315.35" width="2.23" height="5.05" fill="#a0ecc2"/>
<rect x="1311.18" y="1315.35" width="2.23" height="5.05" fill="#a0ecc2"/>
<rect x="1313.41" y="1315.35" width="2.23" height="5.05" fill="#a0ecc2"/>
<rect x="1315.64" y="1315.35" width="2.23" height="5.05" fill="#a0ecc2"/>
<rect x="1317.87" y="1315.35" width="2.23" height="5.05" fill="#a0ecc2"/>
<rect x="1320.10" y="1315.35" width="2.23" height="5.05" fill="#a0ecc2"/>
<rect x="1322.33" y="1315.35" width="2.23" height="5.05" fill="#a0ecc2"/>
<rect x="1324.56" y="1315.35" width="2.23" height="5.05" fill="#a0ecc2"/>
<rect x="1326.79" y="1315.35" width="2.23" height="5.05" fill="#a0ecc2"/>
<rect x="1329.02" y="1315.35" width="2.23" height="5.05" fill="#a0ecc2"/>
<rect x="1331.25" y="1315.35" width="2.23" height="5.05" fill="#a0ecc2"/>
<rect x="1333.48" y="1315.35" width="2.23" height="5.05" fill="#a0ecc2"/>
<rect x="1335.71" y="1315.35" width="2.23" height="5.05" fill="#a0ecc2"/>
<rect x="1337.94" y="1315.35" width="2.23" height="5.05" fill="#a0ecc2"/>
<rect x="1340.17" y="1315.35" width="2.23" height="5.05" fill="#a0ecc2"/>
<rect x="1342.40" y="1315.35" width="2.23" height="5.05" fill="#a0ecc2"/>
<rect x="1344.63" y="1315.35" width="2.23" height="5.05" fill="#a0ecc2"/>
<rect x="1346.87" y="1315.35" width="2.23" height="5.05" fill="#a0ecc2"/>
<rect x="1349.10" y="1315.35" width="2.23" height="5.05" fill="#a0ecc2"/>
<rect x="1351.33" y="1315.35" width="2.23" height="5.05" fill="#a0ecc2"/>
<rect x="1353.56" y="1315.35" width="2.23" height="5.05" fill="#a0ecc2"/>
<rect x="1355.79" y="1315.35" width="2.23" height="5.05" fill="#a0ecc2"/>
<rect x="1358.02" y="1315.35" width="2.23" height="5.05" fill="#a0ecc2"/>
<rect x="1360.25" y="1214.33" width="2.23" height="106.07" fill="#a0ecc2"/>
<rect x="1362.48" y="1269.89" width="2.23" height="50.51" fill="#a0ecc2"/>
<rect x="1364.71" y="1234.53" width="2.23" height="85.87" fill="#a0ecc2"/>
<rect x="1366.94" y="1295.14" width="2.23" height="25.26" fill="#a0ecc2"/>
<rect x="1369.17" y="1310.30" width="2.23" height="10.10" fill="#a0ecc2"/>
<rect x="1371.40" y="1315.35" width="2.23" height="5.05" fill="#a0ecc2"/>
<rect x="1373.63" y="1315.35" width="2.23" height="5.05" fill="#a0ecc2"/>
<rect x="1375.86" y="1310.30" width="2.23" height="10.10" fill="#a0ecc2"/>
<rect x="1378.09" y="1305.25" width="2.23" height="15.15" fill="#a0ecc2"/>
<rect x="1380.32" y="1305.25" width="2.23" height="15.15" fill="#a0ecc2"/>
<rect x="1382.55" y="1315.35" width="2.23" height="5.05" fill="#a0ecc2"/>
<rect x="1384.78" y="1315.35" width="2.23" height="5.05" fill="#a0ecc2"/>
<rect x="1387.01" y="1315.35" width="2.23" height="5.05" fill="#a0ecc2"/>
<rect x="1389.24" y="1315.35" width="2.23" height="5.05" fill="#a0ecc2"/>
<rect x="1391.47" y="1315.35" width="2.23" height="5.05" fill="#a0ecc2"/>
<rect x="1393.70" y="1315.35" width="2.23" height="5.05" fill="#a0ecc2"/>
<rect x="1395.93" y="1315.35" width="2.23" height="5.05" fill="#a0ecc2"/>
<rect x="1398.16" y="1315.35" width="2.23" height="5.05" fill="#a0ecc2"/>
<rect x="1400.39" y="1315.35" width="2.23" height="5.05" fill="#a0ecc2"/>
<rect x="1402.62" y="1315.35" width="2.23" height="5.05" fill="#a0ecc2"/>
<rect x="1404.85" y="1315.35" width="2.23" height="5.05" fill="#a0ecc2"/>
<rect x="1407.08" y="1315.35" width="2.23" height="5.05" fill="#a0ecc2"/>
<rect x="1409.31" y="1315.35" width="2.23" height="5.05" fill="#a0ecc2"/>
<rect x="1411.54" y="1315.35" width="2.23" height="5.05" fill="#a0ecc2"/>
<rect x="1413.77" y="1315.35" width="2.23" height="5.05" fill="#a0ecc2"/>
<rect x="1416.00" y="1315.35" width="2.23" height="5.05" fill="#a0ecc2"/>
<rect x="1418.23" y="1315.35" width="2.23" height="5.05" fill="#a0ecc2"/>
<rect x="1420.46" y="1315.35" width="2.23" height="5.05" fill="#a0ecc2"/>
<rect x="1422.69" y="1315.35" width="2.23" height="5.05" fill="#a0ecc2"/>
<rect x="1424.92" y="1315.35" width="2.23" height="5.05" fill="#a0ecc2"/>
<rect x="1427.15" y="1315.35" width="2.23" height="5.05" fill="#a0ecc2"/>
<rect x="1429.38" y="1315.35" width="2.23" height="5.05" fill="#a0ecc2"/>
<rect x="1431.61" y="1315.35" width="2.23" height="5.05" fill="#a0ecc2"/>
<rect x="1433.84" y="1315.35" width="2.23" height="5.05" fill="#a0ecc2"/>
<rect x="1436.07" y="1315.35" width="2.23" height="5.05" fill="#a0ecc2"/>
<rect x="1438.30" y="1315.35" width="2.23" height="5.05" fill="#a0ecc2"/>
<rect x="1440.53" y="1315.35" width="2.23" height="5.05" fill="#a0ecc2"/>
<rect x="1442.76" y="1315.35" width="2.23" height="5.05" fill="#a0ecc2"/>
<rect x="1444.99" y="1315.35" width="2.23" height="5.05" fill="#a0ecc2"/>
<rect x="1447.22" y="1310.30" width="2.23" height="10.10" fill="#a0ecc2"/>
<rect x="1449.45" y="1315.35" width="2.23" height="5.05" fill="#a0ecc2"/>
<rect x="1451.68" y="1315.35" width="2.23" height="5.05" fill="#a0ecc2"/>
<rect x="1453.92" y="1315.35" width="2.23" height="5.05" fill="#a0ecc2"/>
<rect x="1456.15" y="1315.35" width="2.23" height="5.05" fill="#a0ecc2"/>
<rect x="1458.38" y="1315.35" width="2.23" height="5.05" fill="#a0ecc2"/>
<rect x="1460.61" y="1315.35" width="2.23" height="5.05" fill="#a0ecc2"/>
<rect x="1462.84" y="1315.35" width="2.23" height="5.05" fill="#a0ecc2"/>
<rect x="1465.07" y="1315.35" width="2.23" height="5.05" fill="#a0ecc2"/>
<rect x="1467.30" y="1315.35" width="2.23" height="5.05" fill="#a0ecc2"/>
<rect x="1469.53" y="1315.35" width="2.23" height="5.05" fill="#a0ecc2"/>
<rect x="1471.76" y="1315.35" width="2.23" height="5.05" fill="#a0ecc2"/>
<rect x="1473.99" y="1315.35" width="2.23" height="5.05" fill="#a0ecc2"/>
<rect x="1476.22" y="1315.35" width="2.23" height="5.05" fill="#a0ecc2"/>
<rect x="1478.45" y="1315.35" width="2.23" height="5.05" fill="#a0ecc2"/>
<rect x="1480.68" y="1315.35" width="2.23" height="5.05" fill="#a0ecc2"/>
<rect x="1482.91" y="1315.35" width="2.23" height="5.05" fill="#a0ecc2"/>
<rect x="1485.14" y="1315.35" width="2.23" height="5.05" fill="#a0ecc2"/>
<rect x="1487.37" y="1315.35" width="2.23" height="5.05" fill="#a0ecc2"/>
<rect x="1489.60" y="1315.35" width="2.23" height="5.05" fill="#a0ecc2"/>
<rect x="1491.83" y="1315.35" width="2.23" height="5.05" fill="#a0ecc2"/>
<rect x="1494.06" y="1315.35" width="2.23" height="5.05" fill="#a0ecc2"/>
<rect x="1496.29" y="1315.35" width="2.23" height="5.05" fill="#a0ecc2"/>
<rect x="1498.52" y="1315.35" width="2.23" height="5.05" fill="#a0ecc2"/>
<rect x="1500.75" y="1315.35" width="2.23" height="5.05" fill="#a0ecc2"/>
<rect x="1502.98" y="1310.30" width="2.23" height="10.10" fill="#a0ecc2"/>
<rect x="1505.21" y="1315.35" width="2.23" height="5.05" fill="#a0ecc2"/>
<rect x="1507.44" y="1315.35" width="2.23" height="5.05" fill="#a0ecc2"/>
<rect x="1509.67" y="1310.30" width="2.23" height="10.10" fill="#a0ecc2"/>
<rect x="1511.90" y="1315.35" width="2.23" height="5.05" fill="#a0ecc2"/>
<rect x="1514.13" y="1315.35" width="2.23" height="5.05" fill="#a0ecc2"/>
<rect x="1516.36" y="1315.35" width="2.23" height="5.05" fill="#a0ecc2"/>
<rect x="1518.59" y="1315.35" width="2.23" height="5.05" fill="#a0ecc2"/>
<rect x="1520.82" y="1315.35" width="2.23" height="5.05" fill="#a0ecc2"/>
<rect x="1523.05" y="1310.30" width="2.23" height="10.10" fill="#a0ecc2"/>
<rect x="1525.28" y="1315.35" width="2.23" height="5.05" fill="#a0ecc2"/>
<rect x="1527.51" y="1315.35" width="2.23" height="5.05" fill="#a0ecc2"/>
<rect x="1529.74" y="1310.30" width="2.23" height="10.10" fill="#a0ecc2"/>
<rect x="1531.97" y="1315.35" width="2.23" height="5.05" fill="#a0ecc2"/>
<rect x="1534.20" y="1315.35" width="2.23" height="5.05" fill="#a0ecc2"/>
<rect x="1536.43" y="1315.35" width="2.23" height="5.05" fill="#a0ecc2"/>
<rect x="1538.66" y="1315.35" width="2.23" height="5.05" fill="#a0ecc2"/>
<rect x="1540.89" y="1315.35" width="2.23" height="5.05" fill="#a0ecc2"/>
<rect x="1543.12" y="1315.35" width="2.23" height="5.05" fill="#a0ecc2"/>
<rect x="1545.35" y="1315.35" width="2.23" height="5.05" fill="#a0ecc2"/>
<rect x="1547.58" y="1315.35" width="2.23" height="5.05" fill="#a0ecc2"/>
<rect x="1549.81" y="1315.35" width="2.23" height="5.05" fill="#a0ecc2"/>
<rect x="1552.04" y="1315.35" width="2.23" height="5.05" fill="#a0ecc2"/>
<rect x="1554.27" y="1315.35" width="2.23" height="5.05" fill="#a0ecc2"/>
<rect x="1556.50" y="1315.35" width="2.23" height="5.05" fill="#a0ecc2"/>
<rect x="1558.73" y="1315.35" width="2.23" height="5.05" fill="#a0ecc2"/>
<rect x="1560.97" y="1315.35" width="2.23" height="5.05" fill="#a0ecc2"/>
<rect x="1563.20" y="1315.35" width="2.23" height="5.05" fill="#a0ecc2"/>
<rect x="1565.43" y="1315.35" width="2.23" height="5.05" fill="#a0ecc2"/>
<rect x="1567.66" y="1315.35" width="2.23" height="5.05" fill="#a0ecc2"/>
<rect x="1569.89" y="1315.35" width="2.23" height="5.05" fill="#a0ecc2"/>
<rect x="1572.12" y="1315.35" width="2.23" height="5.05" fill="#a0ecc2"/>
<rect x="1574.35" y="1315.35" width="2.23" height="5.05" fill="#a0ecc2"/>
<rect x="1576.58" y="1315.35" width="2.23" height="5.05" fill="#a0ecc2"/>
<rect x="1578.81" y="1315.35" width="2.23" height="5.05" fill="#a0ecc2"/>
<rect x="1581.04" y="1315.35" width="2.23" height="5.05" fill="#a0ecc2"/>
<rect x="1583.27" y="1315.35" width="2.23" height="5.05" fill="#a0ecc2"/>
<rect x="1585.50" y="1315.35" width="2.23" height="5.05" fill="#a0ecc2"/>
<rect x="1587.73" y="1315.35" width="2.23" height="5.05" fill="#a0ecc2"/>
<rect x="1589.96" y="1315.35" width="2.23" height="5.05" fill="#a0ecc2"/>
<rect x="1592.19" y="1315.35" width="2.23" height="5.05" fill="#a0ecc2"/>
<rect x="1594.42" y="1315.35" width="2.23" height="5.05" fill="#a0ecc2"/>
<rect x="1596.65" y="1315.35" width="2.23" height="5.05" fill="#a0ecc2"/>
<rect x="1598.88" y="1315.35" width="2.23" height="5.05" fill="#a0ecc2"/>
<rect x="1601.11" y="1315.35" width="2.23" height="5.05" fill="#a0ecc2"/>
<rect x="1603.34" y="1315.35" width="2.23" height="5.05" fill="#a0ecc2"/>
<rect x="1605.57" y="1315.35" width="2.23" height="5.05" fill="#a0ecc2"/>
<rect x="1607.80" y="1315.35" width="2.23" height="5.05" fill="#a0ecc2"/>
<rect x="1610.03" y="1315.35" width="2.23" height="5.05" fill="#a0ecc2"/>
<rect x="1612.26" y="1315.35" width="2.23" height="5.05" fill="#a0ecc2"/>
<rect x="1614.49" y="1315.35" width="2.23" height="5.05" fill="#a0ecc2"/>
<rect x="1616.72" y="1315.35" width="2.23" height="5.05" fill="#a0ecc2"/>
<rect x="1618.95" y="1315.35" width="2.23" height="5.05" fill="#a0ecc2"/>
<rect x="1621.18" y="1315.35" width="2.23" height="5.05" fill="#a0ecc2"/>
<rect x="1623.41" y="1315.35" width="2.23" height="5.05" fill="#a0ecc2"/>
<rect x="1625.64" y="1315.35" width="2.23" height="5.05" fill="#a0ecc2"/>
<rect x="1627.87" y="1315.35" width="2.23" height="5.05" fill="#a0ecc2"/>
<rect x="1630.10" y="1315.35" width="2.23" height="5.05" fill="#a0ecc2"/>
<rect x="1632.33" y="1315.35" width="2.23" height="5.05" fill="#a0ecc2"/>
<rect x="1634.56" y="1315.35" width="2.23" height="5.05" fill="#a0ecc2"/>
<rect x="1636.79" y="1315.35" width="2.23" height="5.05" fill="#a0ecc2"/>
<rect x="1639.02" y="1315.35" width="2.23" height="5.05" fill="#a0ecc2"/>
<rect x="1641.25" y="1315.35" width="2.23" height="5.05" fill="#a0ecc2"/>
<rect x="1643.48" y="1315.35" width="2.23" height="5.05" fill="#a0ecc2"/>
<rect x="1645.71" y="1315.35" width="2.23" height="5.05" fill="#a0ecc2"/>
<rect x="1647.94" y="1315.35" width="2.23" height="5.05" fill="#a0ecc2"/>
<rect x="1650.17" y="1315.35" width="2.23" height="5.05" fill="#a0ecc2"/>
<rect x="1652.40" y="1315.35" width="2.23" height="5.05" fill="#a0ecc2"/>
<rect x="1654.63" y="1315.35" width="2.23" height="5.05" fill="#a0ecc2"/>
<rect x="1656.86" y="1315.35" width="2.23" height="5.05" fill="#a0ecc2"/>
<rect x="1659.09" y="1315.35" width="2.23" height="5.05" fill="#a0ecc2"/>
<rect x="1661.32" y="1315.35" width="2.23" height="5.05" fill="#a0ecc2"/>
<rect x="1663.55" y="1315.35" width="2.23" height="5.05" fill="#a0ecc2"/>
<rect x="1665.78" y="1315.35" width="2.23" height="5.05" fill="#a0ecc2"/>
<rect x="1668.02" y="1315.35" width="2.23" height="5.05" fill="#a0ecc2"/>
<rect x="1670.25" y="1315.35" width="2.23" height="5.05" fill="#a0ecc2"/>
<rect x="1672.48" y="1315.35" width="2.23" height="5.05" fill="#a0ecc2"/>
<rect x="1674.71" y="1315.35" width="2.23" height="5.05" fill="#a0ecc2"/>
<rect x="1676.94" y="1315.35" width="2.23" height="5.05" fill="#a0ecc2"/>
<rect x="1679.17" y="1310.80" width="2.23" height="9.60" fill="#a0ecc2"/>
<rect x="1681.40" y="1315.35" width="2.23" height="5.05" fill="#a0ecc2"/>
<rect x="1683.63" y="1315.35" width="2.23" height="5.05" fill="#a0ecc2"/>
<rect x="1685.86" y="1315.35" width="2.23" height="5.05" fill="#a0ecc2"/>
<rect x="1688.09" y="1315.35" width="2.23" height="5.05" fill="#a0ecc2"/>
<rect x="1690.32" y="1315.35" width="2.23" height="5.05" fill="#a0ecc2"/>
<rect x="1692.55" y="1315.35" width="2.23" height="5.05" fill="#a0ecc2"/>
<rect x="1694.78" y="1315.35" width="2.23" height="5.05" fill="#a0ecc2"/>
<rect x="1697.01" y="1315.35" width="2.23" height="5.05" fill="#a0ecc2"/>
<rect x="1699.24" y="1315.35" width="2.23" height="5.05" fill="#a0ecc2"/>
<rect x="1701.47" y="1315.35" width="2.23" height="5.05" fill="#a0ecc2"/>
<rect x="1703.70" y="1315.35" width="2.23" height="5.05" fill="#a0ecc2"/>
<rect x="1705.93" y="1315.35" width="2.23" height="5.05" fill="#a0ecc2"/>
<rect x="1708.16" y="1315.35" width="2.23" height="5.05" fill="#a0ecc2"/>
<rect x="1710.39" y="1315.35" width="2.23" height="5.05" fill="#a0ecc2"/>
<rect x="1712.62" y="1315.35" width="2.23" height="5.05" fill="#a0ecc2"/>
<rect x="1714.85" y="1315.35" width="2.23" height="5.05" fill="#a0ecc2"/>
<rect x="1717.08" y="1315.35" width="2.23" height="5.05" fill="#a0ecc2"/>
<rect x="1719.31" y="1315.35" width="2.23" height="5.05" fill="#a0ecc2"/>
<rect x="1721.54" y="1315.35" width="2.23" height="5.05" fill="#a0ecc2"/>
<rect x="1723.77" y="1315.35" width="2.23" height="5.05" fill="#a0ecc2"/>
<rect x="1726.00" y="1315.35" width="2.23" height="5.05" fill="#a0ecc2"/>
<rect x="1728.23" y="1315.35" width="2.23" height="5.05" fill="#a0ecc2"/>
<rect x="1730.46" y="1315.35" width="2.23" height="5.05" fill="#a0ecc2"/>
<rect x="1732.69" y="1315.35" width="2.23" height="5.05" fill="#a0ecc2"/>
<rect x="1734.92" y="1315.35" width="2.23" height="5.05" fill="#a0ecc2"/>
<rect x="1737.15" y="1315.35" width="2.23" height="5.05" fill="#a0ecc2"/>
<rect x="1739.38" y="1315.35" width="2.23" height="5.05" fill="#a0ecc2"/>
<rect x="1741.61" y="1315.35" width="2.23" height="5.05" fill="#a0ecc2"/>
<rect x="1743.84" y="1315.35" width="2.23" height="5.05" fill="#a0ecc2"/>
<rect x="1746.07" y="1315.35" width="2.23" height="5.05" fill="#a0ecc2"/>
<rect x="1748.30" y="1315.35" width="2.23" height="5.05" fill="#a0ecc2"/>
<rect x="1750.53" y="1315.35" width="2.23" height="5.05" fill="#a0ecc2"/>
<rect x="1752.76" y="1315.35" width="2.23" height="5.05" fill="#a0ecc2"/>
<rect x="1754.99" y="1315.35" width="2.23" height="5.05" fill="#a0ecc2"/>
<rect x="1757.22" y="1315.35" width="2.23" height="5.05" fill="#a0ecc2"/>
<rect x="1759.45" y="1310.30" width="2.23" height="10.10" fill="#a0ecc2"/>
<rect x="1761.68" y="1310.30" width="2.23" height="10.10" fill="#a0ecc2"/>
<rect x="1763.91" y="1315.35" width="2.23" height="5.05" fill="#a0ecc2"/>
<rect x="1766.14" y="1310.30" width="2.23" height="10.10" fill="#a0ecc2"/>
<rect x="1768.37" y="1315.35" width="2.23" height="5.05" fill="#a0ecc2"/>
<rect x="1770.60" y="1310.30" width="2.23" height="10.10" fill="#a0ecc2"/>
<rect x="1772.83" y="1310.30" width="2.23" height="10.10" fill="#a0ecc2"/>
<rect x="1775.07" y="1315.35" width="2.23" height="5.05" fill="#a0ecc2"/>
<rect x="1777.30" y="1310.30" width="2.23" height="10.10" fill="#a0ecc2"/>
<rect x="1779.53" y="1310.30" width="2.23" height="10.10" fill="#a0ecc2"/>
<rect x="1781.76" y="1310.30" width="2.23" height="10.10" fill="#a0ecc2"/>
<rect x="1783.99" y="1310.30" width="2.23" height="10.10" fill="#a0ecc2"/>
<rect x="1786.22" y="1310.30" width="2.23" height="10.10" fill="#a0ecc2"/>
<rect x="1788.45" y="1315.35" width="2.23" height="5.05" fill="#a0ecc2"/>
<rect x="1790.68" y="1310.30" width="2.23" height="10.10" fill="#a0ecc2"/>
<rect x="1792.91" y="1310.30" width="2.23" height="10.10" fill="#a0ecc2"/>
<rect x="1795.14" y="1315.35" width="2.23" height="5.05" fill="#a0ecc2"/>
<rect x="1797.37" y="1315.35" width="2.23" height="5.05" fill="#a0ecc2"/>
<rect x="1799.60" y="1315.35" width="2.23" height="5.05" fill="#a0ecc2"/>
<rect x="1801.83" y="1310.30" width="2.23" height="10.10" fill="#a0ecc2"/>
<rect x="1804.06" y="1315.35" width="2.23" height="5.05" fill="#a0ecc2"/>
<rect x="1806.29" y="1310.30" width="2.23" height="10.10" fill="#a0ecc2"/>
<rect x="1808.52" y="1315.35" width="2.23" height="5.05" fill="#a0ecc2"/>
<rect x="1810.75" y="1310.30" width="2.23" height="10.10" fill="#a0ecc2"/>
<rect x="1812.98" y="1310.30" width="2.23" height="10.10" fill="#a0ecc2"/>
<rect x="1815.21" y="1310.30" width="2.23" height="10.10" fill="#a0ecc2"/>
<rect x="1817.44" y="1310.30" width="2.23" height="10.10" fill="#a0ecc2"/>
<rect x="1819.67" y="1315.35" width="2.23" height="5.05" fill="#a0ecc2"/>
<rect x="1821.90" y="1310.30" width="2.23" height="10.10" fill="#a0ecc2"/>
<rect x="1824.13" y="1315.35" width="2.23" height="5.05" fill="#a0ecc2"/>
<rect x="1826.36" y="1315.35" width="2.23" height="5.05" fill="#a0ecc2"/>
<rect x="1828.59" y="1310.30" width="2.23" height="10.10" fill="#a0ecc2"/>
<rect x="1830.82" y="1315.35" width="2.23" height="5.05" fill="#a0ecc2"/>
<rect x="1833.05" y="1310.30" width="2.23" height="10.10" fill="#a0ecc2"/>
<rect x="1835.28" y="1310.30" width="2.23" height="10.10" fill="#a0ecc2"/>
<rect x="1837.51" y="1310.30" width="2.23" height="10.10" fill="#a0ecc2"/>
<rect x="1839.74" y="1315.35" width="2.23" height="5.05" fill="#a0ecc2"/>
<rect x="1841.97" y="1310.30" width="2.23" height="10.10" fill="#a0ecc2"/>
<rect x="1844.20" y="1310.30" width="2.23" height="10.10" fill="#a0ecc2"/>
<rect x="1846.43" y="1315.35" width="2.23" height="5.05" fill="#a0ecc2"/>
<rect x="1848.66" y="1310.30" width="2.23" height="10.10" fill="#a0ecc2"/>
<rect x="1850.89" y="1310.30" width="2.23" height="10.10" fill="#a0ecc2"/>
<rect x="1853.12" y="1315.35" width="2.23" height="5.05" fill="#a0ecc2"/>
<rect x="1855.35" y="1315.35" width="2.23" height="5.05" fill="#a0ecc2"/>
<rect x="1857.58" y="1310.30" width="2.23" height="10.10" fill="#a0ecc2"/>
<rect x="1859.81" y="1315.35" width="2.23" height="5.05" fill="#a0ecc2"/>
<rect x="1862.04" y="1305.25" width="2.23" height="15.15" fill="#a0ecc2"/>
<rect x="1864.27" y="1315.35" width="2.23" height="5.05" fill="#a0ecc2"/>
<rect x="1866.50" y="1315.35" width="2.23" height="5.05" fill="#a0ecc2"/>
<rect x="1868.73" y="1310.30" width="2.23" height="10.10" fill="#a0ecc2"/>
<rect x="1870.96" y="1315.35" width="2.23" height="5.05" fill="#a0ecc2"/>
<rect x="1873.19" y="1310.30" width="2.23" height="10.10" fill="#a0ecc2"/>
<rect x="1875.42" y="1310.30" width="2.23" height="10.10" fill="#a0ecc2"/>
<rect x="1877.65" y="1315.35" width="2.23" height="5.05" fill="#a0ecc2"/>
<rect x="1879.88" y="1310.30" width="2.23" height="10.10" fill="#a0ecc2"/>
<rect x="1882.12" y="1310.30" width="2.23" height="10.10" fill="#a0ecc2"/>
<rect x="1884.35" y="1310.30" width="2.23" height="10.10" fill="#a0ecc2"/>
<rect x="1886.58" y="1315.35" width="2.23" height="5.05" fill="#a0ecc2"/>
<rect x="1888.81" y="1315.35" width="2.23" height="5.05" fill="#a0ecc2"/>
<rect x="1891.04" y="1315.35" width="2.23" height="5.05" fill="#a0ecc2"/>
<rect x="1893.27" y="1315.35" width="2.23" height="5.05" fill="#a0ecc2"/>
<rect x="1895.50" y="1310.30" width="2.23" height="10.10" fill="#a0ecc2"/>
<rect x="1897.73" y="1315.35" width="2.23" height="5.05" fill="#a0ecc2"/>
<rect x="1899.96" y="1315.35" width="2.23" height="5.05" fill="#a0ecc2"/>
<rect x="1902.19" y="1315.35" width="2.23" height="5.05" fill="#a0ecc2"/>
<rect x="1904.42" y="1310.30" width="2.23" height="10.10" fill="#a0ecc2"/>
<rect x="1906.65" y="1315.35" width="2.23" height="5.05" fill="#a0ecc2"/>
<rect x="1908.88" y="1315.35" width="2.23" height="5.05" fill="#a0ecc2"/>
<rect x="1911.11" y="1315.35" width="2.23" height="5.05" fill="#a0ecc2"/>
<rect x="1913.34" y="1315.35" width="2.23" height="5.05" fill="#a0ecc2"/>
<rect x="1915.57" y="1315.35" width="2.23" height="5.05" fill="#a0ecc2"/>
<rect x="1917.80" y="1315.35" width="2.23" height="5.05" fill="#a0ecc2"/>
<rect x="1920.03" y="1315.35" width="2.23" height="5.05" fill="#a0ecc2"/>
<rect x="1922.26" y="1315.35" width="2.23" height="5.05" fill="#a0ecc2"/>
<rect x="1924.49" y="1315.35" width="2.23" height="5.05" fill="#a0ecc2"/>
<rect x="1926.72" y="1315.35" width="2.23" height="5.05" fill="#a0ecc2"/>
<rect x="1928.95" y="1315.35" width="2.23" height="5.05" fill="#a0ecc2"/>
<rect x="1931.18" y="1315.35" width="2.23" height="5.05" fill="#a0ecc2"/>
<rect x="1933.41" y="1315.35" width="2.23" height="5.05" fill="#a0ecc2"/>
<rect x="1935.64" y="1315.35" width="2.23" height="5.05" fill="#a0ecc2"/>
<rect x="1937.87" y="1315.35" width="2.23" height="5.05" fill="#a0ecc2"/>
<rect x="1940.10" y="1315.35" width="2.23" height="5.05" fill="#a0ecc2"/>
<rect x="1942.33" y="1315.35" width="2.23" height="5.05" fill="#a0ecc2"/>
<rect x="1944.56" y="1315.35" width="2.23" height="5.05" fill="#a0ecc2"/>
<rect x="1946.79" y="1315.35" width="2.23" height="5.05" fill="#a0ecc2"/>
<rect x="1949.02" y="1315.35" width="2.23" height="5.05" fill="#a0ecc2"/>
<rect x="1951.25" y="1315.35" width="2.23" height="5.05" fill="#a0ecc2"/>
<rect x="1953.48" y="1315.35" width="2.23" height="5.05" fill="#a0ecc2"/>
<rect x="1955.71" y="1310.30" width="2.23" height="10.10" fill="#a0ecc2"/>
<rect x="1957.94" y="1315.35" width="2.23" height="5.05" fill="#a0ecc2"/>
<rect x="1960.17" y="1315.35" width="2.23" height="5.05" fill="#a0ecc2"/>
<rect x="1962.40" y="1315.35" width="2.23" height="5.05" fill="#a0ecc2"/>
<rect x="1964.63" y="1315.35" width="2.23" height="5.05" fill="#a0ecc2"/>
<rect x="1966.86" y="1315.35" width="2.23" height="5.05" fill="#a0ecc2"/>
<rect x="1969.09" y="1315.35" width="2.23" height="5.05" fill="#a0ecc2"/>
<rect x="1971.32" y="1315.35" width="2.23" height="5.05" fill="#a0ecc2"/>
<rect x="1973.55" y="1315.35" width="2.23" height="5.05" fill="#a0ecc2"/>
<rect x="1975.78" y="1315.35" width="2.23" height="5.05" fill="#a0ecc2"/>
<rect x="1978.01" y="1315.35" width="2.23" height="5.05" fill="#a0ecc2"/>
<rect x="1980.24" y="1315.35" width="2.23" height="5.05" fill="#a0ecc2"/>
<rect x="1982.47" y="1315.35" width="2.23" height="5.05" fill="#a0ecc2"/>
<rect x="1984.70" y="1315.35" width="2.23" height="5.05" fill="#a0ecc2"/>
<rect x="1986.93" y="1315.35" width="2.23" height="5.05" fill="#a0ecc2"/>
<rect x="1989.17" y="1315.35" width="2.23" height="5.05" fill="#a0ecc2"/>
<rect x="1991.40" y="1315.35" width="2.23" height="5.05" fill="#a0ecc2"/>
<rect x="1993.63" y="1315.35" width="2.23" height="5.05" fill="#a0ecc2"/>
<rect x="1995.86" y="1315.35" width="2.23" height="5.05" fill="#a0ecc2"/>
<rect x="1998.09" y="1315.35" width="2.23" height="5.05" fill="#a0ecc2"/>
<rect x="2000.32" y="1315.35" width="2.23" height="5.05" fill="#a0ecc2"/>
<rect x="2002.55" y="1315.35" width="2.23" height="5.05" fill="#a0ecc2"/>
<rect x="2004.78" y="1310.30" width="2.23" height="10.10" fill="#a0ecc2"/>
<rect x="2007.01" y="1315.35" width="2.23" height="5.05" fill="#a0ecc2"/>
<rect x="2009.24" y="1315.35" width="2.23" height="5.05" fill="#a0ecc2"/>
<rect x="2011.47" y="1315.35" width="2.23" height="5.05" fill="#a0ecc2"/>
<rect x="2013.70" y="1315.35" width="2.23" height="5.05" fill="#a0ecc2"/>
<rect x="2015.93" y="1315.35" width="2.23" height="5.05" fill="#a0ecc2"/>
<rect x="2018.16" y="1315.35" width="2.23" height="5.05" fill="#a0ecc2"/>
<rect x="2020.39" y="1315.35" width="2.23" height="5.05" fill="#a0ecc2"/>
<rect x="2022.62" y="1315.35" width="2.23" height="5.05" fill="#a0ecc2"/>
<rect x="2024.85" y="1315.35" width="2.23" height="5.05" fill="#a0ecc2"/>
<rect x="2027.08" y="1315.35" width="2.23" height="5.05" fill="#a0ecc2"/>
<rect x="2029.31" y="1310.30" width="2.23" height="10.10" fill="#a0ecc2"/>
<rect x="2031.54" y="1310.30" width="2.23" height="10.10" fill="#a0ecc2"/>
<rect x="2033.77" y="1310.30" width="2.23" height="10.10" fill="#a0ecc2"/>
<rect x="2036.00" y="1310.30" width="2.23" height="10.10" fill="#a0ecc2"/>
<rect x="2038.23" y="1310.30" width="2.23" height="10.10" fill="#a0ecc2"/>
<rect x="2040.46" y="1315.35" width="2.23" height="5.05" fill="#a0ecc2"/>
<rect x="2042.69" y="1315.35" width="2.23" height="5.05" fill="#a0ecc2"/>
<rect x="2044.92" y="1310.30" width="2.23" height="10.10" fill="#a0ecc2"/>
<rect x="2047.15" y="1310.30" width="2.23" height="10.10" fill="#a0ecc2"/>
<rect x="2049.38" y="1310.30" width="2.23" height="10.10" fill="#a0ecc2"/>
<rect x="2051.61" y="1310.30" width="2.23" height="10.10" fill="#a0ecc2"/>
<rect x="2053.84" y="1305.25" width="2.23" height="15.15" fill="#a0ecc2"/>
<rect x="2056.07" y="1305.25" width="2.23" height="15.15" fill="#a0ecc2"/>
<rect x="2058.30" y="1305.25" width="2.23" height="15.15" fill="#a0ecc2"/>
<rect x="2060.53" y="1305.25" width="2.23" height="15.15" fill="#a0ecc2"/>
<rect x="2062.76" y="1305.25" width="2.23" height="15.15" fill="#a0ecc2"/>
<rect x="2064.99" y="1305.25" width="2.23" height="15.15" fill="#a0ecc2"/>
<rect x="2067.22" y="1305.25" width="2.23" height="15.15" fill="#a0ecc2"/>
<rect x="2069.45" y="1310.30" width="2.23" height="10.10" fill="#a0ecc2"/>
<rect x="2071.68" y="1305.25" width="2.23" height="15.15" fill="#a0ecc2"/>
<rect x="2073.91" y="1305.25" width="2.23" height="15.15" fill="#a0ecc2"/>
<rect x="2076.14" y="1305.25" width="2.23" height="15.15" fill="#a0ecc2"/>
<rect x="2078.37" y="1310.30" width="2.23" height="10.10" fill="#a0ecc2"/>
<rect x="2080.60" y="1300.20" width="2.23" height="20.20" fill="#a0ecc2"/>
<rect x="2082.83" y="1305.25" width="2.23" height="15.15" fill="#a0ecc2"/>
<rect x="2085.06" y="1305.25" width="2.23" height="15.15" fill="#a0ecc2"/>
<rect x="2087.29" y="1305.25" width="2.23" height="15.15" fill="#a0ecc2"/>
<rect x="2089.52" y="1305.25" width="2.23" height="15.15" fill="#a0ecc2"/>
<rect x="2091.75" y="1305.25" width="2.23" height="15.15" fill="#a0ecc2"/>
<rect x="2093.98" y="1300.20" width="2.23" height="20.20" fill="#a0ecc2"/>
<rect x="2096.22" y="1305.25" width="2.23" height="15.15" fill="#a0ecc2"/>
<rect x="2098.45" y="1305.25" width="2.23" height="15.15" fill="#a0ecc2"/>
<rect x="2100.68" y="1305.25" width="2.23" height="15.15" fill="#a0ecc2"/>
<rect x="2102.91" y="1305.25" width="2.23" height="15.15" fill="#a0ecc2"/>
<rect x="2105.14" y="1305.25" width="2.23" height="15.15" fill="#a0ecc2"/>
<rect x="2107.37" y="1305.25" width="2.23" height="15.15" fill="#a0ecc2"/>
<rect x="2109.60" y="1305.25" width="2.23" height="15.15" fill="#a0ecc2"/>
<rect x="2111.83" y="1305.25" width="2.23" height="15.15" fill="#a0ecc2"/>
<rect x="2114.06" y="1305.25" width="2.23" height="15.15" fill="#a0ecc2"/>
<rect x="2116.29" y="1305.25" width="2.23" height="15.15" fill="#a0ecc2"/>
<rect x="2118.52" y="1305.25" width="2.23" height="15.15" fill="#a0ecc2"/>
<rect x="2120.75" y="1310.30" width="2.23" height="10.10" fill="#a0ecc2"/>
<rect x="2122.98" y="1305.25" width="2.23" height="15.15" fill="#a0ecc2"/>
<rect x="2125.21" y="1305.25" width="2.23" height="15.15" fill="#a0ecc2"/>
<rect x="2127.44" y="1305.25" width="2.23" height="15.15" fill="#a0ecc2"/>
<rect x="2129.67" y="1305.25" width="2.23" height="15.15" fill="#a0ecc2"/>
<rect x="2131.90" y="1305.25" width="2.23" height="15.15" fill="#a0ecc2"/>
<rect x="2134.13" y="1310.30" width="2.23" height="10.10" fill="#a0ecc2"/>
<rect x="2136.36" y="1305.25" width="2.23" height="15.15" fill="#a0ecc2"/>
<rect x="2138.59" y="1300.20" width="2.23" height="20.20" fill="#a0ecc2"/>
<rect x="2140.82" y="1310.30" width="2.23" height="10.10" fill="#a0ecc2"/>
<rect x="2143.05" y="1305.25" width="2.23" height="15.15" fill="#a0ecc2"/>
<rect x="2145.28" y="1305.25" width="2.23" height="15.15" fill="#a0ecc2"/>
<rect x="2147.51" y="1305.25" width="2.23" height="15.15" fill="#a0ecc2"/>
<rect x="2149.74" y="1305.25" width="2.23" height="15.15" fill="#a0ecc2"/>
<rect x="2151.97" y="1305.25" width="2.23" height="15.15" fill="#a0ecc2"/>
<rect x="2154.20" y="1305.25" width="2.23" height="15.15" fill="#a0ecc2"/>
<rect x="2156.43" y="1305.25" width="2.23" height="15.15" fill="#a0ecc2"/>
<rect x="2158.66" y="1305.25" width="2.23" height="15.15" fill="#a0ecc2"/>
<rect x="2160.89" y="1305.25" width="2.23" height="15.15" fill="#a0ecc2"/>
<rect x="2163.12" y="1305.25" width="2.23" height="15.15" fill="#a0ecc2"/>
<rect x="2165.35" y="1305.25" width="2.23" height="15.15" fill="#a0ecc2"/>
<rect x="2167.58" y="1305.25" width="2.23" height="15.15" fill="#a0ecc2"/>
<rect x="2169.81" y="1305.25" width="2.23" height="15.15" fill="#a0ecc2"/>
<rect x="2172.04" y="1305.25" width="2.23" height="15.15" fill="#a0ecc2"/>
<rect x="2174.27" y="1305.25" width="2.23" height="15.15" fill="#a0ecc2"/>
<rect x="2176.50" y="1310.30" width="2.23" height="10.10" fill="#a0ecc2"/>
<rect x="2178.73" y="1305.25" width="2.23" height="15.15" fill="#a0ecc2"/>
<rect x="2180.96" y="1305.25" width="2.23" height="15.15" fill="#a0ecc2"/>
<rect x="2183.19" y="1305.25" width="2.23" height="15.15" fill="#a0ecc2"/>
<rect x="2185.42" y="1305.25" width="2.23" height="15.15" fill="#a0ecc2"/>
<rect x="2187.65" y="1305.25" width="2.23" height="15.15" fill="#a0ecc2"/>
<rect x="2189.88" y="1305.25" width="2.23" height="15.15" fill="#a0ecc2"/>
<rect x="2192.11" y="1310.30" width="2.23" height="10.10" fill="#a0ecc2"/>
<rect x="2194.34" y="1310.30" width="2.23" height="10.10" fill="#a0ecc2"/>
<rect x="2196.57" y="1305.25" width="2.23" height="15.15" fill="#a0ecc2"/>
<rect x="2198.80" y="1305.25" width="2.23" height="15.15" fill="#a0ecc2"/>
<rect x="2201.03" y="1305.25" width="2.23" height="15.15" fill="#a0ecc2"/>
<rect x="2203.27" y="1305.25" width="2.23" height="15.15" fill="#a0ecc2"/>
<rect x="2205.50" y="1305.25" width="2.23" height="15.15" fill="#a0ecc2"/>
<rect x="2207.73" y="1305.25" width="2.23" height="15.15" fill="#a0ecc2"/>
<rect x="2209.96" y="1310.30" width="2.23" height="10.10" fill="#a0ecc2"/>
<rect x="2212.19" y="1305.25" width="2.23" height="15.15" fill="#a0ecc2"/>
<rect x="2214.42" y="1305.25" width="2.23" height="15.15" fill="#a0ecc2"/>
<rect x="2216.65" y="1310.30" width="2.23" height="10.10" fill="#a0ecc2"/>
<rect x="2218.88" y="1305.25" width="2.23" height="15.15" fill="#a0ecc2"/>
<rect x="2221.11" y="1305.25" width="2.23" height="15.15" fill="#a0ecc2"/>
<rect x="2223.34" y="1305.25" width="2.23" height="15.15" fill="#a0ecc2"/>
<rect x="2225.57" y="1305.25" width="2.23" height="15.15" fill="#a0ecc2"/>
<rect x="2227.80" y="1305.25" width="2.23" height="15.15" fill="#a0ecc2"/>
<rect x="2230.03" y="1310.30" width="2.23" height="10.10" fill="#a0ecc2"/>
<rect x="2232.26" y="1310.30" width="2.23" height="10.10" fill="#a0ecc2"/>
<rect x="2234.49" y="1310.30" width="2.23" height="10.10" fill="#a0ecc2"/>
<rect x="2236.72" y="1310.30" width="2.23" height="10.10" fill="#a0ecc2"/>
<rect x="2238.95" y="1305.25" width="2.23" height="15.15" fill="#a0ecc2"/>
<rect x="2241.18" y="1310.30" width="2.23" height="10.10" fill="#a0ecc2"/>
<rect x="2243.41" y="1310.30" width="2.23" height="10.10" fill="#a0ecc2"/>
<rect x="2245.64" y="1310.30" width="2.23" height="10.10" fill="#a0ecc2"/>
<rect x="2247.87" y="1310.30" width="2.23" height="10.10" fill="#a0ecc2"/>
<rect x="2250.10" y="1310.30" width="2.23" height="10.10" fill="#a0ecc2"/>
<rect x="2252.33" y="1310.30" width="2.23" height="10.10" fill="#a0ecc2"/>
<rect x="2254.56" y="1310.30" width="2.23" height="10.10" fill="#a0ecc2"/>
<rect x="2256.79" y="1310.30" width="2.23" height="10.10" fill="#a0ecc2"/>
<rect x="2259.02" y="1310.30" width="2.23" height="10.10" fill="#a0ecc2"/>
<rect x="2261.25" y="1315.35" width="2.23" height="5.05" fill="#a0ecc2"/>
<rect x="2263.48" y="1310.30" width="2.23" height="10.10" fill="#a0ecc2"/>
<rect x="2265.71" y="1315.35" width="2.23" height="5.05" fill="#a0ecc2"/>
<rect x="2267.94" y="1315.35" width="2.23" height="5.05" fill="#a0ecc2"/>
<rect x="2270.17" y="1315.35" width="2.23" height="5.05" fill="#a0ecc2"/>
<rect x="2272.40" y="1310.30" width="2.23" height="10.10" fill="#a0ecc2"/>
<rect x="2274.63" y="1310.30" width="2.23" height="10.10" fill="#a0ecc2"/>
<rect x="2276.86" y="1310.30" width="2.23" height="10.10" fill="#a0ecc2"/>
<rect x="2279.09" y="1310.30" width="2.23" height="10.10" fill="#a0ecc2"/>
<rect x="2281.32" y="1310.30" width="2.23" height="10.10" fill="#a0ecc2"/>
<rect x="2283.55" y="1310.30" width="2.23" height="10.10" fill="#a0ecc2"/>
<rect x="2285.78" y="1315.35" width="2.23" height="5.05" fill="#a0ecc2"/>
<rect x="2288.01" y="1315.35" width="2.23" height="5.05" fill="#a0ecc2"/>
<rect x="2290.24" y="1310.30" width="2.23" height="10.10" fill="#a0ecc2"/>
<rect x="2292.47" y="1310.30" width="2.23" height="10.10" fill="#a0ecc2"/>
<rect x="2294.70" y="1310.30" width="2.23" height="10.10" fill="#a0ecc2"/>
<rect x="2296.93" y="1310.30" width="2.23" height="10.10" fill="#a0ecc2"/>
<rect x="2299.16" y="1310.30" width="2.23" height="10.10" fill="#a0ecc2"/>
<rect x="2301.39" y="1315.35" width="2.23" height="5.05" fill="#a0ecc2"/>
<rect x="2303.62" y="1310.30" width="2.23" height="10.10" fill="#a0ecc2"/>
<rect x="2305.85" y="1310.30" width="2.23" height="10.10" fill="#a0ecc2"/>
</g><g>
<rect x="891.00" y="1313.83" width="1.00" height="6.57" fill="#23906f"/>
<rect x="892.00" y="1310.30" width="1.60" height="10.10" fill="#23906f"/>
<rect x="893.60" y="1313.83" width="1.40" height="6.57" fill="#23906f"/>
<rect x="895.00" y="1310.30" width="1.60" height="10.10" fill="#23906f"/>
<rect x="896.60" y="1313.83" width="1.40" height="6.57" fill="#23906f"/>
<rect x="898.00" y="1310.30" width="1.60" height="10.10" fill="#23906f"/>
<rect x="899.60" y="1313.83" width="1.40" height="6.57" fill="#23906f"/>
<rect x="901.00" y="1310.30" width="1.60" height="10.10" fill="#23906f"/>
<rect x="902.60" y="1313.83" width="0.50" height="6.57" fill="#23906f"/>
<rect x="903.10" y="1265.85" width="2.10" height="54.55" fill="#23906f"/>
<rect x="905.20" y="1189.58" width="1.60" height="130.82" fill="#23906f"/>
<rect x="906.80" y="1224.94" width="1.40" height="95.46" fill="#23906f"/>
<rect x="908.20" y="1229.99" width="2.40" height="90.41" fill="#23906f"/>
<rect x="910.60" y="1134.02" width="1.60" height="186.38" fill="#23906f"/>
<rect x="912.20" y="1089.06" width="2.00" height="231.34" fill="#23906f"/>
<rect x="914.20" y="1053.71" width="2.00" height="266.69" fill="#23906f"/>
<rect x="916.20" y="1119.37" width="1.50" height="201.03" fill="#23906f"/>
<rect x="917.70" y="1255.24" width="1.20" height="65.16" fill="#23906f"/>
<rect x="918.90" y="1189.58" width="2.00" height="130.82" fill="#23906f"/>
<rect x="920.90" y="1250.19" width="1.40" height="70.21" fill="#23906f"/>
<rect x="922.30" y="1229.99" width="1.60" height="90.41" fill="#23906f"/>
<rect x="923.90" y="1259.79" width="1.40" height="60.61" fill="#23906f"/>
<rect x="925.30" y="1274.94" width="1.60" height="45.46" fill="#23906f"/>
<rect x="926.90" y="1234.53" width="1.00" height="85.87" fill="#23906f"/>
<rect x="927.90" y="1164.32" width="1.50" height="156.08" fill="#23906f"/>
<rect x="929.40" y="1179.48" width="1.60" height="140.92" fill="#23906f"/>
<rect x="931.00" y="1159.27" width="2.00" height="161.13" fill="#23906f"/>
<rect x="933.00" y="1244.63" width="1.40" height="75.77" fill="#23906f"/>
<rect x="934.40" y="1219.38" width="1.00" height="101.02" fill="#23906f"/>
<rect x="935.40" y="1204.73" width="2.00" height="115.67" fill="#23906f"/>
<rect x="937.40" y="1254.74" width="1.00" height="65.66" fill="#23906f"/>
<rect x="938.40" y="1290.09" width="1.40" height="30.31" fill="#23906f"/>
<rect x="939.80" y="1224.94" width="1.70" height="95.46" fill="#23906f"/>
<rect x="941.50" y="1164.32" width="2.00" height="156.08" fill="#23906f"/>
<rect x="943.50" y="1124.42" width="1.60" height="195.98" fill="#23906f"/>
<rect x="945.10" y="1244.63" width="1.40" height="75.77" fill="#23906f"/>
<rect x="946.50" y="1249.69" width="1.60" height="70.71" fill="#23906f"/>
<rect x="948.10" y="1234.53" width="1.00" height="85.87" fill="#23906f"/>
<rect x="949.10" y="1154.22" width="1.40" height="166.18" fill="#23906f"/>
<rect x="950.50" y="1184.53" width="1.60" height="135.87" fill="#23906f"/>
<rect x="952.10" y="1194.63" width="2.10" height="125.77" fill="#23906f"/>
<rect x="954.20" y="1240.09" width="1.40" height="80.31" fill="#23906f"/>
<rect x="955.60" y="1244.63" width="1.40" height="75.77" fill="#23906f"/>
<rect x="957.00" y="1269.89" width="3.00" height="50.51" fill="#23906f"/>
<rect x="960.00" y="1264.84" width="3.00" height="55.56" fill="#23906f"/>
<rect x="963.00" y="1259.79" width="4.00" height="60.61" fill="#23906f"/>
<rect x="967.00" y="1204.73" width="2.10" height="115.67" fill="#23906f"/>
<rect x="969.10" y="1224.94" width="2.60" height="95.46" fill="#23906f"/>
<rect x="971.70" y="1234.53" width="2.40" height="85.87" fill="#23906f"/>
<rect x="974.10" y="1254.74" width="2.40" height="65.66" fill="#23906f"/>
<rect x="976.50" y="1264.84" width="2.00" height="55.56" fill="#23906f"/>
<rect x="978.50" y="1254.74" width="2.40" height="65.66" fill="#23906f"/>
<rect x="980.90" y="1264.84" width="4.30" height="55.56" fill="#23906f"/>
<rect x="985.20" y="1259.79" width="9.00" height="60.61" fill="#23906f"/>
<rect x="994.20" y="1264.84" width="4.50" height="55.56" fill="#23906f"/>
<rect x="998.70" y="1189.58" width="2.60" height="130.82" fill="#23906f"/>
<rect x="1001.30" y="1244.63" width="2.00" height="75.77" fill="#23906f"/>
<rect x="1003.30" y="1259.79" width="4.00" height="60.61" fill="#23906f"/>
<rect x="1007.30" y="1194.63" width="2.00" height="125.77" fill="#23906f"/>
<rect x="1009.30" y="1124.42" width="2.10" height="195.98" fill="#23906f"/>
<rect x="1011.40" y="1078.96" width="2.00" height="241.44" fill="#23906f"/>
<rect x="1013.40" y="1239.58" width="1.40" height="80.82" fill="#23906f"/>
<rect x="1014.80" y="1259.79" width="1.60" height="60.61" fill="#23906f"/>
<rect x="1016.40" y="1199.68" width="4.40" height="120.72" fill="#23906f"/>
<rect x="1020.80" y="1239.58" width="2.00" height="80.82" fill="#23906f"/>
<rect x="1022.80" y="1249.69" width="1.70" height="70.71" fill="#23906f"/>
<rect x="1024.50" y="1264.84" width="5.00" height="55.56" fill="#23906f"/>
<rect x="1029.50" y="1239.58" width="2.40" height="80.82" fill="#23906f"/>
<rect x="1031.90" y="1269.89" width="2.20" height="50.51" fill="#23906f"/>
<rect x="1034.10" y="1264.84" width="4.00" height="55.56" fill="#23906f"/>
<rect x="1212.70" y="1313.83" width="0.80" height="6.57" fill="#23906f"/>
<rect x="1213.50" y="1310.30" width="1.50" height="10.10" fill="#23906f"/>
<rect x="1215.00" y="1313.83" width="1.30" height="6.57" fill="#23906f"/>
<rect x="1216.30" y="1310.30" width="1.50" height="10.10" fill="#23906f"/>
<rect x="1217.80" y="1313.83" width="0.60" height="6.57" fill="#23906f"/>
<rect x="1218.40" y="1269.89" width="1.40" height="50.51" fill="#23906f"/>
<rect x="1219.80" y="1184.02" width="2.00" height="136.38" fill="#23906f"/>
<rect x="1221.80" y="855.71" width="2.40" height="464.69" fill="#23906f"/>
<rect x="1224.20" y="1017.34" width="2.60" height="303.06" fill="#23906f"/>
<rect x="1226.80" y="1168.87" width="1.60" height="151.53" fill="#23906f"/>
<rect x="1228.40" y="1077.45" width="1.90" height="242.95" fill="#23906f"/>
<rect x="1230.30" y="1103.21" width="1.40" height="217.19" fill="#23906f"/>
<rect x="1231.70" y="1144.12" width="2.20" height="176.28" fill="#23906f"/>
<rect x="1233.90" y="1229.99" width="1.50" height="90.41" fill="#23906f"/>
<rect x="1235.40" y="1244.13" width="1.50" height="76.27" fill="#23906f"/>
<rect x="1236.90" y="1164.32" width="1.70" height="156.08" fill="#23906f"/>
<rect x="1238.60" y="1082.50" width="1.00" height="237.90" fill="#23906f"/>
<rect x="1239.60" y="966.83" width="2.00" height="353.57" fill="#23906f"/>
<rect x="1241.60" y="1062.80" width="2.30" height="257.60" fill="#23906f"/>
<rect x="1243.90" y="1229.99" width="2.60" height="90.41" fill="#23906f"/>
<rect x="1246.50" y="1224.94" width="2.00" height="95.46" fill="#23906f"/>
<rect x="1248.50" y="1092.09" width="1.20" height="228.31" fill="#23906f"/>
<rect x="1249.70" y="921.37" width="2.00" height="399.03" fill="#23906f"/>
<rect x="1251.70" y="1037.04" width="1.10" height="283.36" fill="#23906f"/>
<rect x="1252.80" y="1154.73" width="1.50" height="165.67" fill="#23906f"/>
<rect x="1254.30" y="1189.07" width="1.90" height="131.33" fill="#23906f"/>
<rect x="1256.20" y="1229.99" width="2.20" height="90.41" fill="#23906f"/>
<rect x="1258.40" y="1169.38" width="1.60" height="151.02" fill="#23906f"/>
<rect x="1260.00" y="1052.70" width="1.30" height="267.70" fill="#23906f"/>
<rect x="1261.30" y="1057.75" width="1.30" height="262.65" fill="#23906f"/>
<rect x="1262.60" y="1185.03" width="1.70" height="135.37" fill="#23906f"/>
<rect x="1264.30" y="1214.33" width="1.80" height="106.07" fill="#23906f"/>
<rect x="1266.10" y="1224.94" width="2.70" height="95.46" fill="#23906f"/>
<rect x="1268.80" y="1164.32" width="1.50" height="156.08" fill="#23906f"/>
<rect x="1270.30" y="1149.17" width="1.50" height="171.23" fill="#23906f"/>
<rect x="1271.80" y="1250.19" width="2.90" height="70.21" fill="#23906f"/>
<rect x="1274.70" y="1229.99" width="2.30" height="90.41" fill="#23906f"/>
<rect x="1277.00" y="1184.02" width="1.40" height="136.38" fill="#23906f"/>
<rect x="1278.40" y="1239.58" width="2.60" height="80.82" fill="#23906f"/>
<rect x="1281.00" y="1234.53" width="4.00" height="85.87" fill="#23906f"/>
<rect x="1285.00" y="1219.89" width="1.80" height="100.51" fill="#23906f"/>
<rect x="1286.80" y="1239.58" width="1.90" height="80.82" fill="#23906f"/>
<rect x="1288.70" y="1254.74" width="2.20" height="65.66" fill="#23906f"/>
<rect x="1290.90" y="1279.99" width="1.20" height="40.41" fill="#23906f"/>
<rect x="1292.10" y="1052.70" width="1.20" height="267.70" fill="#23906f"/>
<rect x="1293.30" y="906.22" width="1.90" height="414.18" fill="#23906f"/>
<rect x="1295.20" y="1072.40" width="1.40" height="248.00" fill="#23906f"/>
<rect x="1296.60" y="1259.79" width="1.50" height="60.61" fill="#23906f"/>
<rect x="1298.10" y="1199.18" width="1.50" height="121.22" fill="#23906f"/>
<rect x="1299.60" y="1239.58" width="2.50" height="80.82" fill="#23906f"/>
<rect x="1302.10" y="1259.79" width="3.00" height="60.61" fill="#23906f"/>
<rect x="1305.10" y="1264.84" width="1.90" height="55.56" fill="#23906f"/>
<rect x="1307.00" y="1199.68" width="1.80" height="120.72" fill="#23906f"/>
<rect x="1308.80" y="1194.12" width="1.70" height="126.28" fill="#23906f"/>
<rect x="1310.50" y="1178.97" width="1.00" height="141.43" fill="#23906f"/>
<rect x="1311.50" y="1057.75" width="2.40" height="262.65" fill="#23906f"/>
<rect x="1313.90" y="1259.79" width="1.50" height="60.61" fill="#23906f"/>
<rect x="1315.40" y="1194.12" width="2.00" height="126.28" fill="#23906f"/>
<rect x="1317.40" y="1259.79" width="2.50" height="60.61" fill="#23906f"/>
<rect x="1319.90" y="1194.12" width="2.20" height="126.28" fill="#23906f"/>
<rect x="1322.10" y="1103.21" width="2.30" height="217.19" fill="#23906f"/>
<rect x="1324.40" y="1123.41" width="2.20" height="196.99" fill="#23906f"/>
<rect x="1326.60" y="1123.92" width="2.20" height="196.48" fill="#23906f"/>
<rect x="1328.80" y="1164.83" width="2.20" height="155.57" fill="#23906f"/>
<rect x="1331.00" y="1174.43" width="2.30" height="145.97" fill="#23906f"/>
<rect x="1333.30" y="1244.63" width="1.50" height="75.77" fill="#23906f"/>
<rect x="1334.80" y="1158.77" width="1.40" height="161.63" fill="#23906f"/>
<rect x="1336.20" y="1184.02" width="1.50" height="136.38" fill="#23906f"/>
<rect x="1337.70" y="1214.33" width="3.00" height="106.07" fill="#23906f"/>
<rect x="1340.70" y="1244.63" width="2.20" height="75.77" fill="#23906f"/>
<rect x="1342.90" y="1250.19" width="2.30" height="70.21" fill="#23906f"/>
<rect x="1345.20" y="1269.89" width="1.90" height="50.51" fill="#23906f"/>
<rect x="1347.10" y="1239.58" width="1.80" height="80.82" fill="#23906f"/>
<rect x="1348.90" y="1224.94" width="1.70" height="95.46" fill="#23906f"/>
<rect x="1350.60" y="1254.74" width="2.00" height="65.66" fill="#23906f"/>
<rect x="1352.60" y="1244.63" width="1.50" height="75.77" fill="#23906f"/>
<rect x="1354.10" y="1254.74" width="2.90" height="65.66" fill="#23906f"/>
<rect x="1357.00" y="1269.89" width="1.50" height="50.51" fill="#23906f"/>
<rect x="1358.50" y="1274.94" width="0.80" height="45.46" fill="#23906f"/>
<rect x="1533.30" y="1313.83" width="3.20" height="6.57" fill="#23906f"/>
<rect x="1536.50" y="1310.30" width="1.50" height="10.10" fill="#23906f"/>
<rect x="1538.00" y="1313.83" width="2.00" height="6.57" fill="#23906f"/>
<rect x="1540.00" y="1310.30" width="1.30" height="10.10" fill="#23906f"/>
<rect x="1541.30" y="1264.84" width="1.50" height="55.56" fill="#23906f"/>
<rect x="1542.80" y="1199.68" width="2.20" height="120.72" fill="#23906f"/>
<rect x="1545.00" y="1234.53" width="2.30" height="85.87" fill="#23906f"/>
<rect x="1547.30" y="1058.25" width="1.50" height="262.15" fill="#23906f"/>
<rect x="1548.80" y="1083.51" width="1.40" height="236.89" fill="#23906f"/>
<rect x="1550.20" y="1118.36" width="1.30" height="202.04" fill="#23906f"/>
<rect x="1551.50" y="1012.29" width="2.20" height="308.11" fill="#23906f"/>
<rect x="1553.70" y="1017.34" width="1.50" height="303.06" fill="#23906f"/>
<rect x="1555.20" y="1093.11" width="0.80" height="227.30" fill="#23906f"/>
<rect x="1556.00" y="1063.30" width="2.50" height="257.10" fill="#23906f"/>
<rect x="1558.50" y="1154.73" width="0.60" height="165.67" fill="#23906f"/>
<rect x="1559.10" y="1244.63" width="1.50" height="75.77" fill="#23906f"/>
<rect x="1560.60" y="1234.53" width="1.80" height="85.87" fill="#23906f"/>
<rect x="1562.40" y="1229.48" width="1.50" height="90.92" fill="#23906f"/>
<rect x="1563.90" y="1255.24" width="1.50" height="65.16" fill="#23906f"/>
<rect x="1565.40" y="1264.84" width="2.30" height="55.56" fill="#23906f"/>
<rect x="1567.70" y="1144.12" width="3.30" height="176.28" fill="#23906f"/>
<rect x="1571.00" y="1264.84" width="1.80" height="55.56" fill="#23906f"/>
<rect x="1572.80" y="1174.43" width="1.90" height="145.97" fill="#23906f"/>
<rect x="1574.70" y="1184.02" width="1.50" height="136.38" fill="#23906f"/>
<rect x="1576.20" y="1113.31" width="0.80" height="207.09" fill="#23906f"/>
<rect x="1577.00" y="1067.85" width="2.50" height="252.55" fill="#23906f"/>
<rect x="1579.50" y="1158.77" width="1.60" height="161.63" fill="#23906f"/>
<rect x="1581.10" y="1224.94" width="0.80" height="95.46" fill="#23906f"/>
<rect x="1581.90" y="1012.29" width="1.50" height="308.11" fill="#23906f"/>
<rect x="1583.40" y="1027.44" width="2.10" height="292.96" fill="#23906f"/>
<rect x="1585.50" y="1214.33" width="0.30" height="106.07" fill="#23906f"/>
<rect x="1585.80" y="1255.24" width="2.70" height="65.16" fill="#23906f"/>
<rect x="1588.50" y="1103.21" width="1.40" height="217.19" fill="#23906f"/>
<rect x="1589.90" y="1042.60" width="2.20" height="277.81" fill="#23906f"/>
<rect x="1592.10" y="1118.36" width="1.10" height="202.04" fill="#23906f"/>
<rect x="1593.20" y="1164.32" width="2.30" height="156.08" fill="#23906f"/>
<rect x="1595.50" y="1199.68" width="2.20" height="120.72" fill="#23906f"/>
<rect x="1597.70" y="1279.99" width="1.50" height="40.41" fill="#23906f"/>
<rect x="1599.20" y="1285.04" width="3.70" height="35.36" fill="#23906f"/>
<rect x="1602.90" y="1250.19" width="3.00" height="70.21" fill="#23906f"/>
<rect x="1605.90" y="1264.84" width="0.90" height="55.56" fill="#23906f"/>
<rect x="1606.80" y="1234.53" width="0.50" height="85.87" fill="#23906f"/>
<rect x="1607.30" y="1224.94" width="1.00" height="95.46" fill="#23906f"/>
<rect x="1608.30" y="1189.07" width="2.30" height="131.33" fill="#23906f"/>
<rect x="1610.60" y="1234.53" width="1.50" height="85.87" fill="#23906f"/>
<rect x="1612.10" y="1244.63" width="1.10" height="75.77" fill="#23906f"/>
<rect x="1613.20" y="1259.79" width="1.00" height="60.61" fill="#23906f"/>
<rect x="1614.20" y="1194.63" width="1.20" height="125.77" fill="#23906f"/>
<rect x="1615.40" y="1093.11" width="0.70" height="227.30" fill="#23906f"/>
<rect x="1616.10" y="1083.51" width="2.50" height="236.89" fill="#23906f"/>
<rect x="1618.60" y="1143.62" width="1.40" height="176.79" fill="#23906f"/>
<rect x="1620.00" y="1108.26" width="0.50" height="212.14" fill="#23906f"/>
<rect x="1620.50" y="1058.25" width="2.00" height="262.15" fill="#23906f"/>
<rect x="1622.50" y="1032.49" width="1.80" height="287.91" fill="#23906f"/>
<rect x="1624.30" y="1219.89" width="1.50" height="100.51" fill="#23906f"/>
<rect x="1625.80" y="1264.84" width="3.00" height="55.56" fill="#23906f"/>
<rect x="1628.80" y="1279.99" width="1.40" height="40.41" fill="#23906f"/>
<rect x="1630.20" y="1264.84" width="1.50" height="55.56" fill="#23906f"/>
<rect x="1631.70" y="1209.28" width="2.30" height="111.12" fill="#23906f"/>
<rect x="1634.00" y="1123.92" width="2.20" height="196.48" fill="#23906f"/>
<rect x="1636.20" y="1118.36" width="1.20" height="202.04" fill="#23906f"/>
<rect x="1637.40" y="1098.16" width="2.50" height="222.24" fill="#23906f"/>
<rect x="1639.90" y="1154.73" width="0.70" height="165.67" fill="#23906f"/>
<rect x="1640.60" y="1239.58" width="2.30" height="80.82" fill="#23906f"/>
<rect x="1642.90" y="1264.84" width="2.20" height="55.56" fill="#23906f"/>
<rect x="1645.10" y="1128.46" width="3.30" height="191.94" fill="#23906f"/>
<rect x="1648.40" y="1250.19" width="2.60" height="70.21" fill="#23906f"/>
<rect x="1651.00" y="1108.26" width="2.30" height="212.14" fill="#23906f"/>
<rect x="1653.30" y="1199.18" width="2.90" height="121.22" fill="#23906f"/>
<rect x="1656.20" y="1158.77" width="2.30" height="161.63" fill="#23906f"/>
<rect x="1658.50" y="1224.94" width="1.80" height="95.46" fill="#23906f"/>
<rect x="1660.30" y="1239.58" width="1.90" height="80.82" fill="#23906f"/>
<rect x="1662.20" y="1229.48" width="3.40" height="90.92" fill="#23906f"/>
<rect x="1665.60" y="1264.84" width="1.80" height="55.56" fill="#23906f"/>
<rect x="1667.40" y="1254.74" width="5.90" height="65.66" fill="#23906f"/>
<rect x="1673.30" y="1269.89" width="1.50" height="50.51" fill="#23906f"/>
<rect x="1674.80" y="1264.84" width="2.20" height="55.56" fill="#23906f"/>
<rect x="1677.00" y="1285.04" width="1.50" height="35.36" fill="#23906f"/>
<rect x="1678.50" y="1300.20" width="1.50" height="20.20" fill="#23906f"/>
<g><rect x="904.83" y="1265.85" width="0.8" height="24.24" fill="#fff" fill-opacity="0.22"/><rect x="909.29" y="1229.99" width="0.8" height="60.11" fill="#fff" fill-opacity="0.22"/><rect x="913.75" y="1089.06" width="0.8" height="201.03" fill="#fff" fill-opacity="0.22"/><rect x="918.22" y="1255.24" width="0.8" height="34.85" fill="#fff" fill-opacity="0.22"/><rect x="922.68" y="1229.99" width="0.8" height="60.11" fill="#fff" fill-opacity="0.22"/><rect x="927.14" y="1234.53" width="0.8" height="55.56" fill="#fff" fill-opacity="0.22"/><rect x="931.60" y="1159.27" width="0.8" height="130.82" fill="#fff" fill-opacity="0.22"/><rect x="936.06" y="1204.73" width="0.8" height="85.36" fill="#fff" fill-opacity="0.22"/><rect x="940.52" y="1224.94" width="0.8" height="65.16" fill="#fff" fill-opacity="0.22"/><rect x="944.98" y="1244.63" width="0.8" height="45.46" fill="#fff" fill-opacity="0.22"/><rect x="949.44" y="1184.53" width="0.8" height="105.57" fill="#fff" fill-opacity="0.22"/><rect x="953.90" y="1240.09" width="0.8" height="50.00" fill="#fff" fill-opacity="0.22"/><rect x="958.36" y="1269.89" width="0.8" height="20.20" fill="#fff" fill-opacity="0.22"/><rect x="962.82" y="1264.84" width="0.8" height="25.25" fill="#fff" fill-opacity="0.22"/><rect x="967.28" y="1204.73" width="0.8" height="85.36" fill="#fff" fill-opacity="0.22"/><rect x="971.74" y="1234.53" width="0.8" height="55.56" fill="#fff" fill-opacity="0.22"/><rect x="976.20" y="1264.84" width="0.8" height="25.25" fill="#fff" fill-opacity="0.22"/><rect x="980.66" y="1264.84" width="0.8" height="25.25" fill="#fff" fill-opacity="0.22"/><rect x="985.12" y="1264.84" width="0.8" height="25.25" fill="#fff" fill-opacity="0.22"/><rect x="989.58" y="1259.79" width="0.8" height="30.31" fill="#fff" fill-opacity="0.22"/><rect x="994.04" y="1264.84" width="0.8" height="25.25" fill="#fff" fill-opacity="0.22"/><rect x="998.50" y="1264.84" width="0.8" height="25.25" fill="#fff" fill-opacity="0.22"/><rect x="1002.96" y="1259.79" width="0.8" height="30.31" fill="#fff" fill-opacity="0.22"/><rect x="1007.42" y="1194.63" width="0.8" height="95.46" fill="#fff" fill-opacity="0.22"/><rect x="1011.88" y="1078.96" width="0.8" height="211.13" fill="#fff" fill-opacity="0.22"/><rect x="1016.34" y="1259.79" width="0.8" height="30.31" fill="#fff" fill-opacity="0.22"/><rect x="1020.80" y="1239.58" width="0.8" height="50.51" fill="#fff" fill-opacity="0.22"/><rect x="1025.27" y="1264.84" width="0.8" height="25.25" fill="#fff" fill-opacity="0.22"/><rect x="1029.73" y="1239.58" width="0.8" height="50.51" fill="#fff" fill-opacity="0.22"/><rect x="1034.19" y="1269.89" width="0.8" height="20.20" fill="#fff" fill-opacity="0.22"/><rect x="1221.52" y="1184.02" width="0.8" height="106.07" fill="#fff" fill-opacity="0.22"/><rect x="1225.98" y="1168.87" width="0.8" height="121.22" fill="#fff" fill-opacity="0.22"/><rect x="1230.44" y="1103.21" width="0.8" height="186.89" fill="#fff" fill-opacity="0.22"/><rect x="1234.90" y="1244.13" width="0.8" height="45.96" fill="#fff" fill-opacity="0.22"/><rect x="1239.37" y="1082.50" width="0.8" height="207.60" fill="#fff" fill-opacity="0.22"/><rect x="1243.83" y="1229.99" width="0.8" height="60.11" fill="#fff" fill-opacity="0.22"/><rect x="1248.29" y="1224.94" width="0.8" height="65.16" fill="#fff" fill-opacity="0.22"/><rect x="1252.75" y="1154.73" width="0.8" height="135.37" fill="#fff" fill-opacity="0.22"/><rect x="1257.21" y="1229.99" width="0.8" height="60.11" fill="#fff" fill-opacity="0.22"/><rect x="1261.67" y="1185.03" width="0.8" height="105.06" fill="#fff" fill-opacity="0.22"/><rect x="1266.13" y="1224.94" width="0.8" height="65.16" fill="#fff" fill-opacity="0.22"/><rect x="1270.59" y="1149.17" width="0.8" height="140.92" fill="#fff" fill-opacity="0.22"/><rect x="1275.05" y="1229.99" width="0.8" height="60.11" fill="#fff" fill-opacity="0.22"/><rect x="1279.51" y="1239.58" width="0.8" height="50.51" fill="#fff" fill-opacity="0.22"/><rect x="1283.97" y="1234.53" width="0.8" height="55.56" fill="#fff" fill-opacity="0.22"/><rect x="1288.43" y="1254.74" width="0.8" height="35.36" fill="#fff" fill-opacity="0.22"/><rect x="1292.89" y="1052.70" width="0.8" height="237.40" fill="#fff" fill-opacity="0.22"/><rect x="1297.35" y="1259.79" width="0.8" height="30.31" fill="#fff" fill-opacity="0.22"/><rect x="1301.81" y="1259.79" width="0.8" height="30.31" fill="#fff" fill-opacity="0.22"/><rect x="1306.27" y="1264.84" width="0.8" height="25.25" fill="#fff" fill-opacity="0.22"/><rect x="1310.73" y="1178.97" width="0.8" height="111.12" fill="#fff" fill-opacity="0.22"/><rect x="1315.19" y="1259.79" width="0.8" height="30.31" fill="#fff" fill-opacity="0.22"/><rect x="1319.65" y="1259.79" width="0.8" height="30.31" fill="#fff" fill-opacity="0.22"/><rect x="1324.11" y="1123.41" width="0.8" height="166.68" fill="#fff" fill-opacity="0.22"/><rect x="1328.57" y="1164.83" width="0.8" height="125.26" fill="#fff" fill-opacity="0.22"/><rect x="1333.03" y="1244.63" width="0.8" height="45.46" fill="#fff" fill-opacity="0.22"/><rect x="1337.49" y="1214.33" width="0.8" height="75.76" fill="#fff" fill-opacity="0.22"/><rect x="1341.95" y="1250.19" width="0.8" height="39.90" fill="#fff" fill-opacity="0.22"/><rect x="1346.42" y="1269.89" width="0.8" height="20.20" fill="#fff" fill-opacity="0.22"/><rect x="1350.88" y="1254.74" width="0.8" height="35.36" fill="#fff" fill-opacity="0.22"/><rect x="1355.34" y="1254.74" width="0.8" height="35.36" fill="#fff" fill-opacity="0.22"/><rect x="1542.67" y="1264.84" width="0.8" height="25.25" fill="#fff" fill-opacity="0.22"/><rect x="1547.13" y="1234.53" width="0.8" height="55.56" fill="#fff" fill-opacity="0.22"/><rect x="1551.59" y="1118.36" width="0.8" height="171.73" fill="#fff" fill-opacity="0.22"/><rect x="1556.05" y="1093.11" width="0.8" height="196.99" fill="#fff" fill-opacity="0.22"/><rect x="1560.52" y="1244.63" width="0.8" height="45.46" fill="#fff" fill-opacity="0.22"/><rect x="1564.98" y="1264.84" width="0.8" height="25.25" fill="#fff" fill-opacity="0.22"/><rect x="1569.44" y="1144.12" width="0.8" height="145.97" fill="#fff" fill-opacity="0.22"/><rect x="1573.90" y="1184.02" width="0.8" height="106.07" fill="#fff" fill-opacity="0.22"/><rect x="1578.36" y="1067.85" width="0.8" height="222.24" fill="#fff" fill-opacity="0.22"/><rect x="1582.82" y="1027.44" width="0.8" height="262.65" fill="#fff" fill-opacity="0.22"/><rect x="1587.28" y="1255.24" width="0.8" height="34.85" fill="#fff" fill-opacity="0.22"/><rect x="1591.74" y="1118.36" width="0.8" height="171.73" fill="#fff" fill-opacity="0.22"/><rect x="1596.20" y="1199.68" width="0.8" height="90.41" fill="#fff" fill-opacity="0.22"/><rect x="1605.12" y="1264.84" width="0.8" height="25.25" fill="#fff" fill-opacity="0.22"/><rect x="1609.58" y="1234.53" width="0.8" height="55.56" fill="#fff" fill-opacity="0.22"/><rect x="1614.04" y="1259.79" width="0.8" height="30.31" fill="#fff" fill-opacity="0.22"/><rect x="1618.50" y="1143.62" width="0.8" height="146.48" fill="#fff" fill-opacity="0.22"/><rect x="1622.96" y="1032.49" width="0.8" height="257.60" fill="#fff" fill-opacity="0.22"/><rect x="1627.42" y="1264.84" width="0.8" height="25.25" fill="#fff" fill-opacity="0.22"/><rect x="1631.88" y="1209.28" width="0.8" height="80.82" fill="#fff" fill-opacity="0.22"/><rect x="1636.34" y="1118.36" width="0.8" height="171.73" fill="#fff" fill-opacity="0.22"/><rect x="1640.80" y="1239.58" width="0.8" height="50.51" fill="#fff" fill-opacity="0.22"/><rect x="1645.26" y="1128.46" width="0.8" height="161.63" fill="#fff" fill-opacity="0.22"/><rect x="1649.72" y="1250.19" width="0.8" height="39.90" fill="#fff" fill-opacity="0.22"/><rect x="1654.18" y="1199.18" width="0.8" height="90.92" fill="#fff" fill-opacity="0.22"/><rect x="1658.64" y="1224.94" width="0.8" height="65.16" fill="#fff" fill-opacity="0.22"/><rect x="1663.10" y="1229.48" width="0.8" height="60.61" fill="#fff" fill-opacity="0.22"/><rect x="1667.57" y="1254.74" width="0.8" height="35.36" fill="#fff" fill-opacity="0.22"/><rect x="1672.03" y="1254.74" width="0.8" height="35.36" fill="#fff" fill-opacity="0.22"/></g>
</g>
<rect x="166.3" y="815.3" width="2" height="506.1" fill="#6e6e6e"/>
<rect x="168.2" y="1319.9" width="2248.05" height="2" fill="#6e6e6e"/>
<rect x="156.8" y="1319.90" width="10" height="1" fill="#a8a8a8"/>
<rect x="156.8" y="1269.39" width="10" height="1" fill="#a8a8a8"/>
<rect x="156.8" y="1218.88" width="10" height="1" fill="#a8a8a8"/>
<rect x="156.8" y="1168.37" width="10" height="1" fill="#a8a8a8"/>
<rect x="156.8" y="1117.86" width="10" height="1" fill="#a8a8a8"/>
<rect x="156.8" y="1067.35" width="10" height="1" fill="#a8a8a8"/>
<rect x="156.8" y="1016.84" width="10" height="1" fill="#a8a8a8"/>
<rect x="156.8" y="966.33" width="10" height="1" fill="#a8a8a8"/>
<rect x="156.8" y="915.82" width="10" height="1" fill="#a8a8a8"/>
<rect x="156.8" y="865.31" width="10" height="1" fill="#a8a8a8"/>
<rect x="156.8" y="814.80" width="10" height="1" fill="#a8a8a8"/>
<rect x="167.70" y="1321.9" width="1" height="10" fill="#b0b0b0"/>
<rect x="488.85" y="1321.9" width="1" height="10" fill="#b0b0b0"/>
<rect x="810.00" y="1321.9" width="1" height="10" fill="#b0b0b0"/>
<rect x="1131.15" y="1321.9" width="1" height="10" fill="#b0b0b0"/>
<rect x="1452.30" y="1321.9" width="1" height="10" fill="#b0b0b0"/>
<rect x="1773.45" y="1321.9" width="1" height="10" fill="#b0b0b0"/>
<rect x="2094.60" y="1321.9" width="1" height="10" fill="#b0b0b0"/>
<text x="145.9" y="1326.8" font-size="22" font-weight="400" fill="#333" text-anchor="end" textLength="12.0" lengthAdjust="spacingAndGlyphs" stroke="#333" stroke-width="0.35">0</text>
<text x="145.9" y="1276.3" font-size="22" font-weight="400" fill="#333" text-anchor="end" textLength="24.1" lengthAdjust="spacingAndGlyphs" stroke="#333" stroke-width="0.35">10</text>
<text x="145.9" y="1225.8" font-size="22" font-weight="400" fill="#333" text-anchor="end" textLength="24.1" lengthAdjust="spacingAndGlyphs" stroke="#333" stroke-width="0.35">20</text>
<text x="145.9" y="1175.3" font-size="22" font-weight="400" fill="#333" text-anchor="end" textLength="24.1" lengthAdjust="spacingAndGlyphs" stroke="#333" stroke-width="0.35">30</text>
<text x="145.9" y="1124.8" font-size="22" font-weight="400" fill="#333" text-anchor="end" textLength="24.1" lengthAdjust="spacingAndGlyphs" stroke="#333" stroke-width="0.35">40</text>
<text x="145.9" y="1074.3" font-size="22" font-weight="400" fill="#333" text-anchor="end" textLength="24.1" lengthAdjust="spacingAndGlyphs" stroke="#333" stroke-width="0.35">50</text>
<text x="145.9" y="1023.7" font-size="22" font-weight="400" fill="#333" text-anchor="end" textLength="24.1" lengthAdjust="spacingAndGlyphs" stroke="#333" stroke-width="0.35">60</text>
<text x="145.9" y="973.2" font-size="22" font-weight="400" fill="#333" text-anchor="end" textLength="24.1" lengthAdjust="spacingAndGlyphs" stroke="#333" stroke-width="0.35">70</text>
<text x="145.9" y="922.7" font-size="22" font-weight="400" fill="#333" text-anchor="end" textLength="24.1" lengthAdjust="spacingAndGlyphs" stroke="#333" stroke-width="0.35">80</text>
<text x="145.9" y="872.2" font-size="22" font-weight="400" fill="#333" text-anchor="end" textLength="24.1" lengthAdjust="spacingAndGlyphs" stroke="#333" stroke-width="0.35">90</text>
<text x="145.9" y="821.7" font-size="22" font-weight="400" fill="#333" text-anchor="end" textLength="35.5" lengthAdjust="spacingAndGlyphs" stroke="#333" stroke-width="0.35">100</text>
<text x="168.2" y="1356.9" font-size="20.5" font-weight="400" fill="#111" text-anchor="middle" textLength="70.5" lengthAdjust="spacingAndGlyphs" stroke="#111" stroke-width="0.4">lun. 06</text>
<text x="489.3" y="1356.9" font-size="20.5" font-weight="400" fill="#111" text-anchor="middle" textLength="76.5" lengthAdjust="spacingAndGlyphs" stroke="#111" stroke-width="0.4">mar. 07</text>
<text x="810.5" y="1356.9" font-size="20.5" font-weight="400" fill="#111" text-anchor="middle" textLength="77.5" lengthAdjust="spacingAndGlyphs" stroke="#111" stroke-width="0.4">mer. 08</text>
<text x="1131.6" y="1356.9" font-size="20.5" font-weight="400" fill="#111" text-anchor="middle" textLength="70.5" lengthAdjust="spacingAndGlyphs" stroke="#111" stroke-width="0.4">jeu. 09</text>
<text x="1452.8" y="1356.9" font-size="20.5" font-weight="400" fill="#111" text-anchor="middle" textLength="75.5" lengthAdjust="spacingAndGlyphs" stroke="#111" stroke-width="0.4">ven. 10</text>
<text x="1774.0" y="1356.9" font-size="20.5" font-weight="400" fill="#111" text-anchor="middle" textLength="75.5" lengthAdjust="spacingAndGlyphs" stroke="#111" stroke-width="0.4">sam. 11</text>
<text x="2095.1" y="1356.9" font-size="20.5" font-weight="400" fill="#111" text-anchor="middle" textLength="77.3" lengthAdjust="spacingAndGlyphs" stroke="#111" stroke-width="0.4">dim. 12</text>
<text transform="translate(85.9,1067.3) rotate(-90)" x="0" y="0" font-size="22" fill="#333" text-anchor="middle" textLength="29.4" lengthAdjust="spacingAndGlyphs">kW</text>
<rect x="562.15" y="806.25" width="411.20" height="57.70" rx="9" fill="#fff" stroke="#808080" stroke-width="3.5"/>
<text x="777.5" y="846.4" font-size="27.6" font-weight="400" fill="#000" text-anchor="middle" textLength="336.2" lengthAdjust="spacingAndGlyphs" xml:space="preserve" stroke="#000" stroke-width="0.3">Consommation: 1 133 kWh</text>
<rect x="1100.05" y="806.25" width="410.80" height="57.70" rx="9" fill="#fff" stroke="#808080" stroke-width="3.5"/>
<text x="1316.2" y="846.4" font-size="27.6" font-weight="400" fill="#000" text-anchor="middle" textLength="191.7" lengthAdjust="spacingAndGlyphs" xml:space="preserve" stroke="#000" stroke-width="0.3">P Max :  92 kW</text>
<rect x="1610.05" y="806.25" width="410.80" height="57.70" rx="9" fill="#fff" stroke="#808080" stroke-width="3.5"/>
<text x="1825.9" y="846.4" font-size="27.6" font-weight="400" fill="#000" text-anchor="middle" textLength="161.6" lengthAdjust="spacingAndGlyphs" xml:space="preserve" stroke="#000" stroke-width="0.3">P min : 0 kW</text>
<rect x="2322.7" y="1322.5" width="115.3" height="56" fill="#fff"/>
<path d="M2361.5 1343.6 A11.6 11.6 0 1 0 2361.6 1351.2 L2350 1351.2" stroke="#0a6cb6" stroke-width="6" fill="none" stroke-linecap="round" stroke-linejoin="round"/>
<path d="M2370.2 1343.5 Q2371 1338.4 2377 1338.4 Q2383.8 1338.6 2383.6 1344.8 Q2383.3 1349 2378.5 1353.2 L2372 1360.5 H2386" stroke="#0a6cb6" stroke-width="5.2" fill="none" stroke-linecap="round" stroke-linejoin="round"/>
<path d="M2392.2 1324.8 L2383.4 1337.4 L2391.2 1337.9 L2389.2 1363.2 L2399.8 1337.6 L2393.6 1336.8 Z" fill="#e8582a"/>
<path d="M2401.2 1339 H2424.2 L2419.3 1345 H2397.4 Z M2398.3 1348 H2417.9 L2413 1354 H2395 Z M2396 1357 H2417 L2410.7 1363 H2393 Z" fill="#f0921f"/>
<text x="2393.6" y="1334.9" font-size="8.2" font-weight="700" fill="#e8602c" textLength="30.4" lengthAdjust="spacingAndGlyphs">FRANCE</text>
<text x="2339.6" y="1368.3" font-size="4" fill="#2f7fc8" textLength="74.4" lengthAdjust="spacingAndGlyphs">Optimisation des ressources énergétiques</text>
</svg>
</body></html>
